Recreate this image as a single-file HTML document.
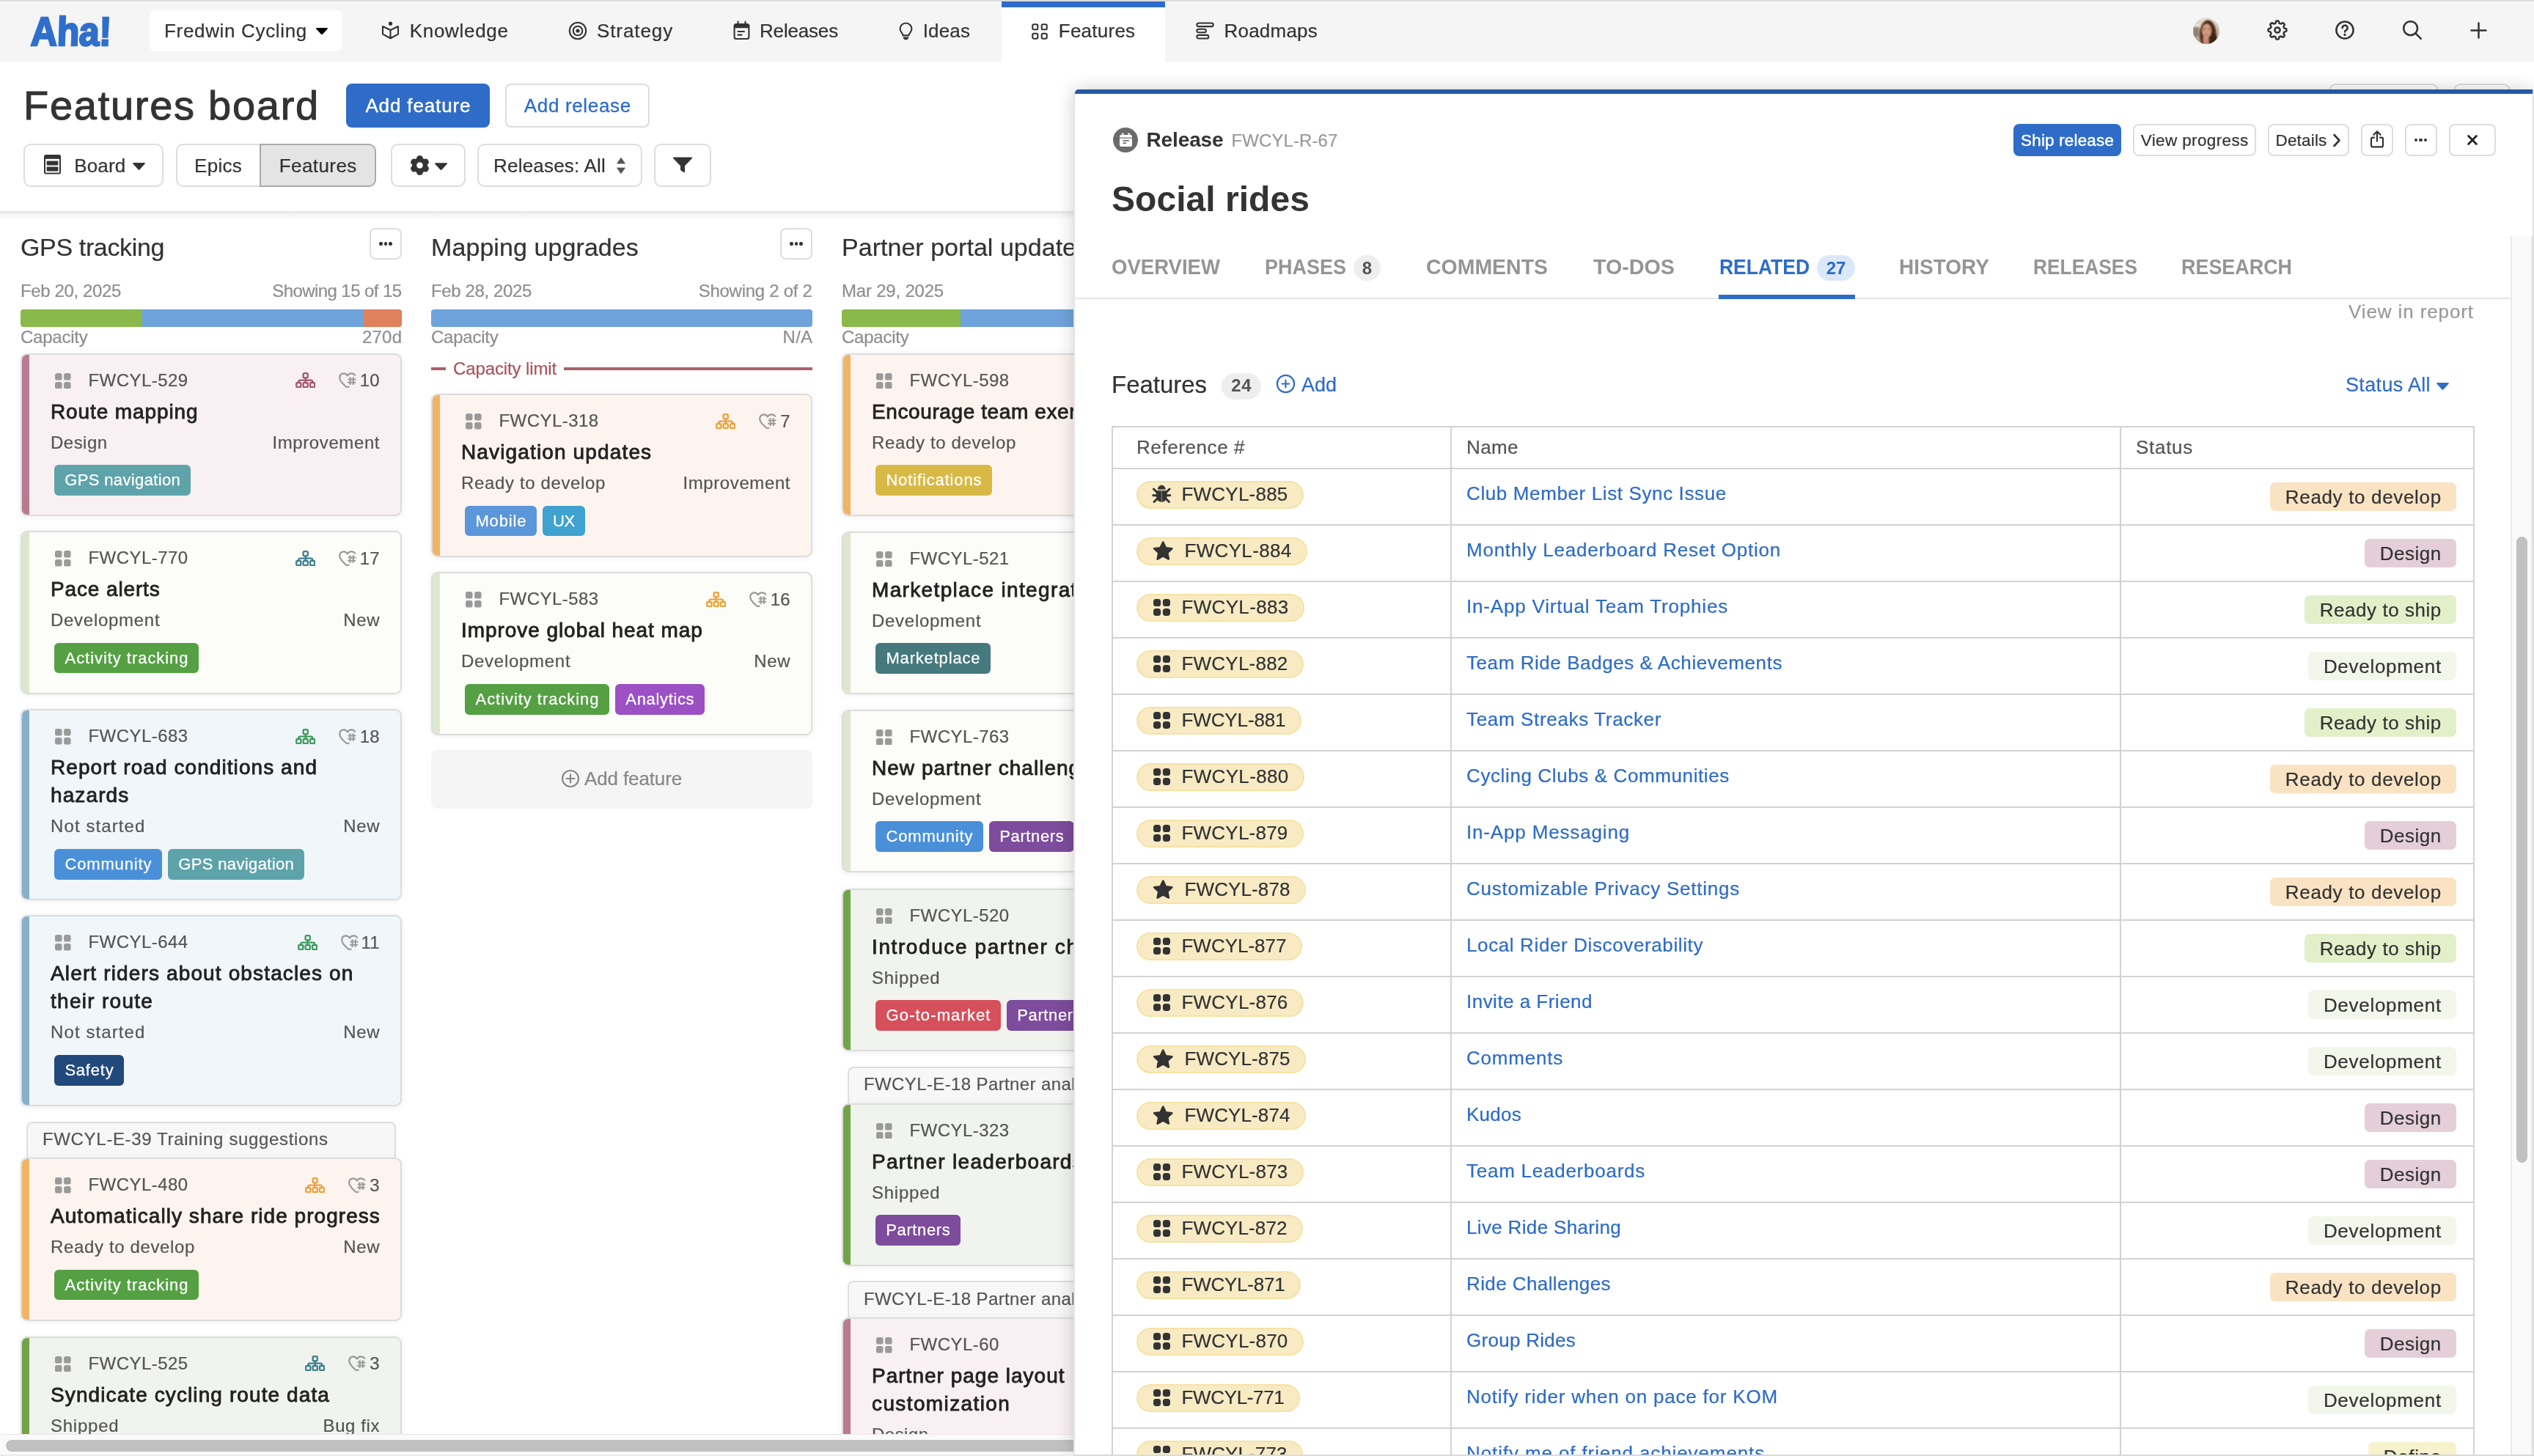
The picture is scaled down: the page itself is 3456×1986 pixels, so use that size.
<!DOCTYPE html>
<html><head><meta charset="utf-8"><title>Features board</title>
<style>
html,body{margin:0;padding:0;}
body{width:3456px;height:1986px;overflow:hidden;position:relative;background:#fff;font-family:"Liberation Sans",sans-serif;}
</style></head><body><div id="w" style="position:absolute;left:0;top:0;width:3456px;height:1986px;overflow:hidden;will-change:transform">
<div id="board" style="position:absolute;left:0;top:288px;width:3456px;height:1698px;overflow:hidden">
<div style="position:absolute;left:0;top:-288px;width:3456px;height:1986px">
<span style="position:absolute;top:314.8px;font-size:34px;line-height:44px;color:#333;white-space:nowrap;-webkit-text-stroke:0.22px #333;letter-spacing:-0.36px;left:28.0px;">GPS tracking</span>
<div style="position:absolute;left:504px;top:311px;width:44px;height:43px;box-sizing:border-box;border:2px solid #ddd;border-radius:8px;background:#fff;"></div>
<div style="position:absolute;left:517.4px;top:330.2px;width:4.4px;height:4.4px;box-sizing:border-box;background:#333;border-radius:50%;"></div>
<div style="position:absolute;left:523.9px;top:330.2px;width:4.4px;height:4.4px;box-sizing:border-box;background:#333;border-radius:50%;"></div>
<div style="position:absolute;left:530.4px;top:330.2px;width:4.4px;height:4.4px;box-sizing:border-box;background:#333;border-radius:50%;"></div>
<span style="position:absolute;top:380.7px;font-size:24px;line-height:31px;color:#8e8e8e;white-space:nowrap;-webkit-text-stroke:0.22px #8e8e8e;letter-spacing:-0.37px;left:28.0px;">Feb 20, 2025</span>
<span style="position:absolute;top:380.7px;font-size:24px;line-height:31px;color:#8e8e8e;white-space:nowrap;-webkit-text-stroke:0.22px #8e8e8e;letter-spacing:-0.59px;right:2908.6px;">Showing 15 of 15</span>
<div style="position:absolute;left:28px;top:422px;width:520px;height:23.5px;border-radius:4px;overflow:hidden;display:flex"><div style="width:166px;background:#8ab84a"></div><div style="width:302px;background:#6fa3dc"></div><div style="width:52px;background:#e0805c"></div></div>
<span style="position:absolute;top:443.8px;font-size:24px;line-height:31px;color:#8e8e8e;white-space:nowrap;-webkit-text-stroke:0.22px #8e8e8e;letter-spacing:-0.23px;left:28.0px;">Capacity</span>
<span style="position:absolute;top:443.8px;font-size:24px;line-height:31px;color:#8e8e8e;white-space:nowrap;-webkit-text-stroke:0.22px #8e8e8e;letter-spacing:0.20px;right:2907.8px;">270d</span>
<div style="position:absolute;left:28px;top:481.6px;width:520px;height:222.5px;box-sizing:border-box;border:2px solid #dcdcdc;border-radius:9px;background:#f8f0f3;box-shadow:0 1px 9px rgba(0,0,0,.07);overflow:hidden"><div style="position:absolute;left:0;top:0;bottom:0;width:10px;background:#b97a92"></div></div>
<svg style="position:absolute;left:75px;top:508.6px" width="21.6" height="21.6" viewBox="0 0 1 1" ><rect x="0.000" y="0.000" width="0.44" height="0.44" rx="0.132" fill="#9a9a9a"/><rect x="0.000" y="0.560" width="0.44" height="0.44" rx="0.132" fill="#9a9a9a"/><rect x="0.560" y="0.000" width="0.44" height="0.44" rx="0.132" fill="#9a9a9a"/><rect x="0.560" y="0.560" width="0.44" height="0.44" rx="0.132" fill="#9a9a9a"/></svg>
<span style="position:absolute;top:502.7px;font-size:24px;line-height:31px;color:#555;white-space:nowrap;-webkit-text-stroke:0.22px #555;letter-spacing:0.45px;left:120.5px;">FWCYL-529</span>
<span style="position:absolute;top:503.1px;font-size:24px;line-height:31px;color:#555;white-space:nowrap;-webkit-text-stroke:0.22px #555;right:2938.5px;">10</span>
<svg style="position:absolute;left:461.5px;top:508.1px" width="24" height="21.4" viewBox="0 0 24 21.4" ><g fill="none" stroke="#999" stroke-width="2.2" stroke-linecap="round" stroke-linejoin="round">
<path d="M13.5 19.6 Q11.8 21 10.2 19.6 C6 16 1.2 12.2 1.2 7.2 C1.2 1.2 8.6 -0.8 11.9 4.4 C14.2 0.6 19.8 0.2 22.2 3.6"/>
</g>
<g stroke="#999" stroke-width="2" stroke-linecap="butt">
<path d="M15.6 6.2 V17 M19.8 6.2 V17 M12.6 9.4 H23.4 M12.2 13.8 H23"/>
</g></svg>
<svg style="position:absolute;left:402.5px;top:508.1px" width="27.4" height="21.4" viewBox="0 0 27.4 21.4" ><g fill="none" stroke="#a4566f" stroke-width="2.3" stroke-linejoin="round" stroke-linecap="round">
<rect x="10.6" y="1.2" width="6.2" height="6.2" rx="1.6"/>
<rect x="1.2" y="14" width="6.2" height="6.2" rx="1.6"/>
<rect x="10.6" y="14" width="6.2" height="6.2" rx="1.6"/>
<rect x="20" y="14" width="6.2" height="6.2" rx="1.6"/>
<path d="M13.7 7.4 V14 M4.3 14 V12.6 Q4.3 10.7 6.2 10.7 H21.2 Q23.1 10.7 23.1 12.6 V14"/>
</g></svg>
<span style="position:absolute;top:543.6px;font-size:28px;line-height:36px;color:#222;white-space:nowrap;-webkit-text-stroke:0.85px #222;letter-spacing:0.89px;left:69.0px;">Route mapping</span>
<span style="position:absolute;top:587.6px;font-size:24px;line-height:31px;color:#555;white-space:nowrap;-webkit-text-stroke:0.22px #555;letter-spacing:0.48px;left:69.0px;">Design</span>
<span style="position:absolute;top:587.6px;font-size:24px;line-height:31px;color:#555;white-space:nowrap;-webkit-text-stroke:0.22px #555;letter-spacing:0.60px;right:2937.9px;">Improvement</span>
<div style="position:absolute;left:74px;top:634.3px;width:186px;height:41.5px;border-radius:6px;background:#5fa3aa"></div>
<span style="position:absolute;top:640.3px;font-size:22px;line-height:29px;color:#fff;white-space:nowrap;-webkit-text-stroke:0.25px #fff;letter-spacing:0.37px;left:-832.8px;width:2000px;text-align:center;">GPS navigation</span>
<div style="position:absolute;left:28px;top:724.2px;width:520px;height:222.5px;box-sizing:border-box;border:2px solid #dcdcdc;border-radius:9px;background:#fcfcf8;box-shadow:0 1px 9px rgba(0,0,0,.07);overflow:hidden"><div style="position:absolute;left:0;top:0;bottom:0;width:10px;background:#dde7cd"></div></div>
<svg style="position:absolute;left:75px;top:751.2px" width="21.6" height="21.6" viewBox="0 0 1 1" ><rect x="0.000" y="0.000" width="0.44" height="0.44" rx="0.132" fill="#9a9a9a"/><rect x="0.000" y="0.560" width="0.44" height="0.44" rx="0.132" fill="#9a9a9a"/><rect x="0.560" y="0.000" width="0.44" height="0.44" rx="0.132" fill="#9a9a9a"/><rect x="0.560" y="0.560" width="0.44" height="0.44" rx="0.132" fill="#9a9a9a"/></svg>
<span style="position:absolute;top:745.3px;font-size:24px;line-height:31px;color:#555;white-space:nowrap;-webkit-text-stroke:0.22px #555;letter-spacing:0.45px;left:120.5px;">FWCYL-770</span>
<span style="position:absolute;top:745.7px;font-size:24px;line-height:31px;color:#555;white-space:nowrap;-webkit-text-stroke:0.22px #555;right:2938.5px;">17</span>
<svg style="position:absolute;left:461.5px;top:750.7px" width="24" height="21.4" viewBox="0 0 24 21.4" ><g fill="none" stroke="#999" stroke-width="2.2" stroke-linecap="round" stroke-linejoin="round">
<path d="M13.5 19.6 Q11.8 21 10.2 19.6 C6 16 1.2 12.2 1.2 7.2 C1.2 1.2 8.6 -0.8 11.9 4.4 C14.2 0.6 19.8 0.2 22.2 3.6"/>
</g>
<g stroke="#999" stroke-width="2" stroke-linecap="butt">
<path d="M15.6 6.2 V17 M19.8 6.2 V17 M12.6 9.4 H23.4 M12.2 13.8 H23"/>
</g></svg>
<svg style="position:absolute;left:402.5px;top:750.7px" width="27.4" height="21.4" viewBox="0 0 27.4 21.4" ><g fill="none" stroke="#3d7f8f" stroke-width="2.3" stroke-linejoin="round" stroke-linecap="round">
<rect x="10.6" y="1.2" width="6.2" height="6.2" rx="1.6"/>
<rect x="1.2" y="14" width="6.2" height="6.2" rx="1.6"/>
<rect x="10.6" y="14" width="6.2" height="6.2" rx="1.6"/>
<rect x="20" y="14" width="6.2" height="6.2" rx="1.6"/>
<path d="M13.7 7.4 V14 M4.3 14 V12.6 Q4.3 10.7 6.2 10.7 H21.2 Q23.1 10.7 23.1 12.6 V14"/>
</g></svg>
<span style="position:absolute;top:786.2px;font-size:28px;line-height:36px;color:#222;white-space:nowrap;-webkit-text-stroke:0.85px #222;letter-spacing:0.87px;left:69.0px;">Pace alerts</span>
<span style="position:absolute;top:830.2px;font-size:24px;line-height:31px;color:#555;white-space:nowrap;-webkit-text-stroke:0.22px #555;letter-spacing:0.72px;left:69.0px;">Development</span>
<span style="position:absolute;top:830.2px;font-size:24px;line-height:31px;color:#555;white-space:nowrap;-webkit-text-stroke:0.22px #555;letter-spacing:0.60px;right:2937.9px;">New</span>
<div style="position:absolute;left:74px;top:876.9000000000001px;width:197px;height:41.5px;border-radius:6px;background:#55a043"></div>
<span style="position:absolute;top:882.9px;font-size:22px;line-height:29px;color:#fff;white-space:nowrap;-webkit-text-stroke:0.25px #fff;letter-spacing:0.95px;left:-827.0px;width:2000px;text-align:center;">Activity tracking</span>
<div style="position:absolute;left:28px;top:967px;width:520px;height:260.8px;box-sizing:border-box;border:2px solid #dcdcdc;border-radius:9px;background:#f1f6fa;box-shadow:0 1px 9px rgba(0,0,0,.07);overflow:hidden"><div style="position:absolute;left:0;top:0;bottom:0;width:10px;background:#86afca"></div></div>
<svg style="position:absolute;left:75px;top:994px" width="21.6" height="21.6" viewBox="0 0 1 1" ><rect x="0.000" y="0.000" width="0.44" height="0.44" rx="0.132" fill="#9a9a9a"/><rect x="0.000" y="0.560" width="0.44" height="0.44" rx="0.132" fill="#9a9a9a"/><rect x="0.560" y="0.000" width="0.44" height="0.44" rx="0.132" fill="#9a9a9a"/><rect x="0.560" y="0.560" width="0.44" height="0.44" rx="0.132" fill="#9a9a9a"/></svg>
<span style="position:absolute;top:988.1px;font-size:24px;line-height:31px;color:#555;white-space:nowrap;-webkit-text-stroke:0.22px #555;letter-spacing:0.45px;left:120.5px;">FWCYL-683</span>
<span style="position:absolute;top:988.5px;font-size:24px;line-height:31px;color:#555;white-space:nowrap;-webkit-text-stroke:0.22px #555;right:2938.5px;">18</span>
<svg style="position:absolute;left:461.5px;top:993.5px" width="24" height="21.4" viewBox="0 0 24 21.4" ><g fill="none" stroke="#999" stroke-width="2.2" stroke-linecap="round" stroke-linejoin="round">
<path d="M13.5 19.6 Q11.8 21 10.2 19.6 C6 16 1.2 12.2 1.2 7.2 C1.2 1.2 8.6 -0.8 11.9 4.4 C14.2 0.6 19.8 0.2 22.2 3.6"/>
</g>
<g stroke="#999" stroke-width="2" stroke-linecap="butt">
<path d="M15.6 6.2 V17 M19.8 6.2 V17 M12.6 9.4 H23.4 M12.2 13.8 H23"/>
</g></svg>
<svg style="position:absolute;left:402.5px;top:993.5px" width="27.4" height="21.4" viewBox="0 0 27.4 21.4" ><g fill="none" stroke="#3c9a5c" stroke-width="2.3" stroke-linejoin="round" stroke-linecap="round">
<rect x="10.6" y="1.2" width="6.2" height="6.2" rx="1.6"/>
<rect x="1.2" y="14" width="6.2" height="6.2" rx="1.6"/>
<rect x="10.6" y="14" width="6.2" height="6.2" rx="1.6"/>
<rect x="20" y="14" width="6.2" height="6.2" rx="1.6"/>
<path d="M13.7 7.4 V14 M4.3 14 V12.6 Q4.3 10.7 6.2 10.7 H21.2 Q23.1 10.7 23.1 12.6 V14"/>
</g></svg>
<span style="position:absolute;top:1029.0px;font-size:28px;line-height:36px;color:#222;white-space:nowrap;-webkit-text-stroke:0.85px #222;letter-spacing:1.07px;left:69.0px;">Report road conditions and</span>
<span style="position:absolute;top:1066.5px;font-size:28px;line-height:36px;color:#222;white-space:nowrap;-webkit-text-stroke:0.85px #222;letter-spacing:1.11px;left:69.0px;">hazards</span>
<span style="position:absolute;top:1111.3px;font-size:24px;line-height:31px;color:#555;white-space:nowrap;-webkit-text-stroke:0.22px #555;letter-spacing:1.10px;left:69.0px;">Not started</span>
<span style="position:absolute;top:1111.3px;font-size:24px;line-height:31px;color:#555;white-space:nowrap;-webkit-text-stroke:0.22px #555;letter-spacing:0.60px;right:2937.9px;">New</span>
<div style="position:absolute;left:74px;top:1158.0px;width:147px;height:41.5px;border-radius:6px;background:#4a90d9"></div>
<span style="position:absolute;top:1164.0px;font-size:22px;line-height:29px;color:#fff;white-space:nowrap;-webkit-text-stroke:0.25px #fff;letter-spacing:0.86px;left:-852.1px;width:2000px;text-align:center;">Community</span>
<div style="position:absolute;left:229px;top:1158.0px;width:186px;height:41.5px;border-radius:6px;background:#5fa3aa"></div>
<span style="position:absolute;top:1164.0px;font-size:22px;line-height:29px;color:#fff;white-space:nowrap;-webkit-text-stroke:0.25px #fff;letter-spacing:0.37px;left:-677.8px;width:2000px;text-align:center;">GPS navigation</span>
<div style="position:absolute;left:28px;top:1248.1px;width:520px;height:260.8px;box-sizing:border-box;border:2px solid #dcdcdc;border-radius:9px;background:#f1f6fa;box-shadow:0 1px 9px rgba(0,0,0,.07);overflow:hidden"><div style="position:absolute;left:0;top:0;bottom:0;width:10px;background:#86afca"></div></div>
<svg style="position:absolute;left:75px;top:1275.1px" width="21.6" height="21.6" viewBox="0 0 1 1" ><rect x="0.000" y="0.000" width="0.44" height="0.44" rx="0.132" fill="#9a9a9a"/><rect x="0.000" y="0.560" width="0.44" height="0.44" rx="0.132" fill="#9a9a9a"/><rect x="0.560" y="0.000" width="0.44" height="0.44" rx="0.132" fill="#9a9a9a"/><rect x="0.560" y="0.560" width="0.44" height="0.44" rx="0.132" fill="#9a9a9a"/></svg>
<span style="position:absolute;top:1269.2px;font-size:24px;line-height:31px;color:#555;white-space:nowrap;-webkit-text-stroke:0.22px #555;letter-spacing:0.45px;left:120.5px;">FWCYL-644</span>
<span style="position:absolute;top:1269.6px;font-size:24px;line-height:31px;color:#555;white-space:nowrap;-webkit-text-stroke:0.22px #555;right:2938.5px;">11</span>
<svg style="position:absolute;left:464.5px;top:1274.6px" width="24" height="21.4" viewBox="0 0 24 21.4" ><g fill="none" stroke="#999" stroke-width="2.2" stroke-linecap="round" stroke-linejoin="round">
<path d="M13.5 19.6 Q11.8 21 10.2 19.6 C6 16 1.2 12.2 1.2 7.2 C1.2 1.2 8.6 -0.8 11.9 4.4 C14.2 0.6 19.8 0.2 22.2 3.6"/>
</g>
<g stroke="#999" stroke-width="2" stroke-linecap="butt">
<path d="M15.6 6.2 V17 M19.8 6.2 V17 M12.6 9.4 H23.4 M12.2 13.8 H23"/>
</g></svg>
<svg style="position:absolute;left:405.5px;top:1274.6px" width="27.4" height="21.4" viewBox="0 0 27.4 21.4" ><g fill="none" stroke="#3c9a5c" stroke-width="2.3" stroke-linejoin="round" stroke-linecap="round">
<rect x="10.6" y="1.2" width="6.2" height="6.2" rx="1.6"/>
<rect x="1.2" y="14" width="6.2" height="6.2" rx="1.6"/>
<rect x="10.6" y="14" width="6.2" height="6.2" rx="1.6"/>
<rect x="20" y="14" width="6.2" height="6.2" rx="1.6"/>
<path d="M13.7 7.4 V14 M4.3 14 V12.6 Q4.3 10.7 6.2 10.7 H21.2 Q23.1 10.7 23.1 12.6 V14"/>
</g></svg>
<span style="position:absolute;top:1310.1px;font-size:28px;line-height:36px;color:#222;white-space:nowrap;-webkit-text-stroke:0.85px #222;letter-spacing:1.14px;left:69.0px;">Alert riders about obstacles on</span>
<span style="position:absolute;top:1347.6px;font-size:28px;line-height:36px;color:#222;white-space:nowrap;-webkit-text-stroke:0.85px #222;letter-spacing:1.28px;left:69.0px;">their route</span>
<span style="position:absolute;top:1392.4px;font-size:24px;line-height:31px;color:#555;white-space:nowrap;-webkit-text-stroke:0.22px #555;letter-spacing:1.10px;left:69.0px;">Not started</span>
<span style="position:absolute;top:1392.4px;font-size:24px;line-height:31px;color:#555;white-space:nowrap;-webkit-text-stroke:0.22px #555;letter-spacing:0.60px;right:2937.9px;">New</span>
<div style="position:absolute;left:74px;top:1439.1px;width:95px;height:41.5px;border-radius:6px;background:#22497b"></div>
<span style="position:absolute;top:1445.1px;font-size:22px;line-height:29px;color:#fff;white-space:nowrap;-webkit-text-stroke:0.25px #fff;letter-spacing:0.77px;left:-878.1px;width:2000px;text-align:center;">Safety</span>
<div style="position:absolute;left:36px;top:1529.5px;width:504px;height:60px;box-sizing:border-box;border:2px solid #dedede;border-radius:8px;background:#f7f7f7;"></div>
<span style="position:absolute;top:1538.3px;font-size:24px;line-height:31px;color:#555;white-space:nowrap;-webkit-text-stroke:0.22px #555;letter-spacing:0.65px;left:58.0px;">FWCYL-E-39 Training suggestions</span>
<div style="position:absolute;left:28px;top:1579px;width:520px;height:222.5px;box-sizing:border-box;border:2px solid #dcdcdc;border-radius:9px;background:#fef4ef;box-shadow:0 1px 9px rgba(0,0,0,.07);overflow:hidden"><div style="position:absolute;left:0;top:0;bottom:0;width:10px;background:#f0b465"></div></div>
<svg style="position:absolute;left:75px;top:1606px" width="21.6" height="21.6" viewBox="0 0 1 1" ><rect x="0.000" y="0.000" width="0.44" height="0.44" rx="0.132" fill="#9a9a9a"/><rect x="0.000" y="0.560" width="0.44" height="0.44" rx="0.132" fill="#9a9a9a"/><rect x="0.560" y="0.000" width="0.44" height="0.44" rx="0.132" fill="#9a9a9a"/><rect x="0.560" y="0.560" width="0.44" height="0.44" rx="0.132" fill="#9a9a9a"/></svg>
<span style="position:absolute;top:1600.1px;font-size:24px;line-height:31px;color:#555;white-space:nowrap;-webkit-text-stroke:0.22px #555;letter-spacing:0.45px;left:120.5px;">FWCYL-480</span>
<span style="position:absolute;top:1600.5px;font-size:24px;line-height:31px;color:#555;white-space:nowrap;-webkit-text-stroke:0.22px #555;right:2938.5px;">3</span>
<svg style="position:absolute;left:474.5px;top:1605.5px" width="24" height="21.4" viewBox="0 0 24 21.4" ><g fill="none" stroke="#999" stroke-width="2.2" stroke-linecap="round" stroke-linejoin="round">
<path d="M13.5 19.6 Q11.8 21 10.2 19.6 C6 16 1.2 12.2 1.2 7.2 C1.2 1.2 8.6 -0.8 11.9 4.4 C14.2 0.6 19.8 0.2 22.2 3.6"/>
</g>
<g stroke="#999" stroke-width="2" stroke-linecap="butt">
<path d="M15.6 6.2 V17 M19.8 6.2 V17 M12.6 9.4 H23.4 M12.2 13.8 H23"/>
</g></svg>
<svg style="position:absolute;left:415.5px;top:1605.5px" width="27.4" height="21.4" viewBox="0 0 27.4 21.4" ><g fill="none" stroke="#eaa23c" stroke-width="2.3" stroke-linejoin="round" stroke-linecap="round">
<rect x="10.6" y="1.2" width="6.2" height="6.2" rx="1.6"/>
<rect x="1.2" y="14" width="6.2" height="6.2" rx="1.6"/>
<rect x="10.6" y="14" width="6.2" height="6.2" rx="1.6"/>
<rect x="20" y="14" width="6.2" height="6.2" rx="1.6"/>
<path d="M13.7 7.4 V14 M4.3 14 V12.6 Q4.3 10.7 6.2 10.7 H21.2 Q23.1 10.7 23.1 12.6 V14"/>
</g></svg>
<span style="position:absolute;top:1641.0px;font-size:28px;line-height:36px;color:#222;white-space:nowrap;-webkit-text-stroke:0.85px #222;letter-spacing:1.04px;left:69.0px;">Automatically share ride progress</span>
<span style="position:absolute;top:1685.0px;font-size:24px;line-height:31px;color:#555;white-space:nowrap;-webkit-text-stroke:0.22px #555;letter-spacing:0.64px;left:69.0px;">Ready to develop</span>
<span style="position:absolute;top:1685.0px;font-size:24px;line-height:31px;color:#555;white-space:nowrap;-webkit-text-stroke:0.22px #555;letter-spacing:0.60px;right:2937.9px;">New</span>
<div style="position:absolute;left:74px;top:1731.7px;width:197px;height:41.5px;border-radius:6px;background:#55a043"></div>
<span style="position:absolute;top:1737.7px;font-size:22px;line-height:29px;color:#fff;white-space:nowrap;-webkit-text-stroke:0.25px #fff;letter-spacing:0.95px;left:-827.0px;width:2000px;text-align:center;">Activity tracking</span>
<div style="position:absolute;left:28px;top:1822.5px;width:520px;height:222.5px;box-sizing:border-box;border:2px solid #dcdcdc;border-radius:9px;background:#f1f4ee;box-shadow:0 1px 9px rgba(0,0,0,.07);overflow:hidden"><div style="position:absolute;left:0;top:0;bottom:0;width:10px;background:#72a348"></div></div>
<svg style="position:absolute;left:75px;top:1849.5px" width="21.6" height="21.6" viewBox="0 0 1 1" ><rect x="0.000" y="0.000" width="0.44" height="0.44" rx="0.132" fill="#9a9a9a"/><rect x="0.000" y="0.560" width="0.44" height="0.44" rx="0.132" fill="#9a9a9a"/><rect x="0.560" y="0.000" width="0.44" height="0.44" rx="0.132" fill="#9a9a9a"/><rect x="0.560" y="0.560" width="0.44" height="0.44" rx="0.132" fill="#9a9a9a"/></svg>
<span style="position:absolute;top:1843.6px;font-size:24px;line-height:31px;color:#555;white-space:nowrap;-webkit-text-stroke:0.22px #555;letter-spacing:0.45px;left:120.5px;">FWCYL-525</span>
<span style="position:absolute;top:1844.0px;font-size:24px;line-height:31px;color:#555;white-space:nowrap;-webkit-text-stroke:0.22px #555;right:2938.5px;">3</span>
<svg style="position:absolute;left:474.5px;top:1849.0px" width="24" height="21.4" viewBox="0 0 24 21.4" ><g fill="none" stroke="#999" stroke-width="2.2" stroke-linecap="round" stroke-linejoin="round">
<path d="M13.5 19.6 Q11.8 21 10.2 19.6 C6 16 1.2 12.2 1.2 7.2 C1.2 1.2 8.6 -0.8 11.9 4.4 C14.2 0.6 19.8 0.2 22.2 3.6"/>
</g>
<g stroke="#999" stroke-width="2" stroke-linecap="butt">
<path d="M15.6 6.2 V17 M19.8 6.2 V17 M12.6 9.4 H23.4 M12.2 13.8 H23"/>
</g></svg>
<svg style="position:absolute;left:415.5px;top:1849.0px" width="27.4" height="21.4" viewBox="0 0 27.4 21.4" ><g fill="none" stroke="#3d7f8f" stroke-width="2.3" stroke-linejoin="round" stroke-linecap="round">
<rect x="10.6" y="1.2" width="6.2" height="6.2" rx="1.6"/>
<rect x="1.2" y="14" width="6.2" height="6.2" rx="1.6"/>
<rect x="10.6" y="14" width="6.2" height="6.2" rx="1.6"/>
<rect x="20" y="14" width="6.2" height="6.2" rx="1.6"/>
<path d="M13.7 7.4 V14 M4.3 14 V12.6 Q4.3 10.7 6.2 10.7 H21.2 Q23.1 10.7 23.1 12.6 V14"/>
</g></svg>
<span style="position:absolute;top:1884.5px;font-size:28px;line-height:36px;color:#222;white-space:nowrap;-webkit-text-stroke:0.85px #222;letter-spacing:1.10px;left:69.0px;">Syndicate cycling route data</span>
<span style="position:absolute;top:1928.5px;font-size:24px;line-height:31px;color:#555;white-space:nowrap;-webkit-text-stroke:0.22px #555;letter-spacing:0.75px;left:69.0px;">Shipped</span>
<span style="position:absolute;top:1928.5px;font-size:24px;line-height:31px;color:#555;white-space:nowrap;-webkit-text-stroke:0.22px #555;letter-spacing:0.60px;right:2937.9px;">Bug fix</span>
<span style="position:absolute;top:314.8px;font-size:34px;line-height:44px;color:#333;white-space:nowrap;-webkit-text-stroke:0.22px #333;letter-spacing:0.08px;left:588.0px;">Mapping upgrades</span>
<div style="position:absolute;left:1064px;top:311px;width:44px;height:43px;box-sizing:border-box;border:2px solid #ddd;border-radius:8px;background:#fff;"></div>
<div style="position:absolute;left:1077.4px;top:330.2px;width:4.4px;height:4.4px;box-sizing:border-box;background:#333;border-radius:50%;"></div>
<div style="position:absolute;left:1083.9px;top:330.2px;width:4.4px;height:4.4px;box-sizing:border-box;background:#333;border-radius:50%;"></div>
<div style="position:absolute;left:1090.4px;top:330.2px;width:4.4px;height:4.4px;box-sizing:border-box;background:#333;border-radius:50%;"></div>
<span style="position:absolute;top:380.7px;font-size:24px;line-height:31px;color:#8e8e8e;white-space:nowrap;-webkit-text-stroke:0.22px #8e8e8e;letter-spacing:-0.37px;left:588.0px;">Feb 28, 2025</span>
<span style="position:absolute;top:380.7px;font-size:24px;line-height:31px;color:#8e8e8e;white-space:nowrap;-webkit-text-stroke:0.22px #8e8e8e;letter-spacing:-0.27px;right:2348.3px;">Showing 2 of 2</span>
<div style="position:absolute;left:588px;top:422px;width:520px;height:23.5px;border-radius:4px;overflow:hidden;display:flex"><div style="width:520px;background:#6fa3dc"></div></div>
<span style="position:absolute;top:443.8px;font-size:24px;line-height:31px;color:#8e8e8e;white-space:nowrap;-webkit-text-stroke:0.22px #8e8e8e;letter-spacing:-0.23px;left:588.0px;">Capacity</span>
<span style="position:absolute;top:443.8px;font-size:24px;line-height:31px;color:#8e8e8e;white-space:nowrap;-webkit-text-stroke:0.22px #8e8e8e;letter-spacing:0.20px;right:2347.8px;">N/A</span>
<div style="position:absolute;left:588px;top:501px;width:20px;height:3.5px;box-sizing:border-box;background:#a9626a;"></div>
<span style="position:absolute;top:487.0px;font-size:24px;line-height:31px;color:#a9525c;white-space:nowrap;-webkit-text-stroke:0.22px #a9525c;letter-spacing:-0.12px;left:618.0px;">Capacity limit</span>
<div style="position:absolute;left:769px;top:501px;width:339px;height:3.5px;box-sizing:border-box;background:#a9626a;"></div>
<div style="position:absolute;left:588px;top:537px;width:520px;height:222.5px;box-sizing:border-box;border:2px solid #dcdcdc;border-radius:9px;background:#fef4ef;box-shadow:0 1px 9px rgba(0,0,0,.07);overflow:hidden"><div style="position:absolute;left:0;top:0;bottom:0;width:10px;background:#f0b465"></div></div>
<svg style="position:absolute;left:635px;top:564px" width="21.6" height="21.6" viewBox="0 0 1 1" ><rect x="0.000" y="0.000" width="0.44" height="0.44" rx="0.132" fill="#9a9a9a"/><rect x="0.000" y="0.560" width="0.44" height="0.44" rx="0.132" fill="#9a9a9a"/><rect x="0.560" y="0.000" width="0.44" height="0.44" rx="0.132" fill="#9a9a9a"/><rect x="0.560" y="0.560" width="0.44" height="0.44" rx="0.132" fill="#9a9a9a"/></svg>
<span style="position:absolute;top:558.1px;font-size:24px;line-height:31px;color:#555;white-space:nowrap;-webkit-text-stroke:0.22px #555;letter-spacing:0.45px;left:680.5px;">FWCYL-318</span>
<span style="position:absolute;top:558.5px;font-size:24px;line-height:31px;color:#555;white-space:nowrap;-webkit-text-stroke:0.22px #555;right:2378.5px;">7</span>
<svg style="position:absolute;left:1034.5px;top:563.5px" width="24" height="21.4" viewBox="0 0 24 21.4" ><g fill="none" stroke="#999" stroke-width="2.2" stroke-linecap="round" stroke-linejoin="round">
<path d="M13.5 19.6 Q11.8 21 10.2 19.6 C6 16 1.2 12.2 1.2 7.2 C1.2 1.2 8.6 -0.8 11.9 4.4 C14.2 0.6 19.8 0.2 22.2 3.6"/>
</g>
<g stroke="#999" stroke-width="2" stroke-linecap="butt">
<path d="M15.6 6.2 V17 M19.8 6.2 V17 M12.6 9.4 H23.4 M12.2 13.8 H23"/>
</g></svg>
<svg style="position:absolute;left:975.5px;top:563.5px" width="27.4" height="21.4" viewBox="0 0 27.4 21.4" ><g fill="none" stroke="#eaa23c" stroke-width="2.3" stroke-linejoin="round" stroke-linecap="round">
<rect x="10.6" y="1.2" width="6.2" height="6.2" rx="1.6"/>
<rect x="1.2" y="14" width="6.2" height="6.2" rx="1.6"/>
<rect x="10.6" y="14" width="6.2" height="6.2" rx="1.6"/>
<rect x="20" y="14" width="6.2" height="6.2" rx="1.6"/>
<path d="M13.7 7.4 V14 M4.3 14 V12.6 Q4.3 10.7 6.2 10.7 H21.2 Q23.1 10.7 23.1 12.6 V14"/>
</g></svg>
<span style="position:absolute;top:599.0px;font-size:28px;line-height:36px;color:#222;white-space:nowrap;-webkit-text-stroke:0.85px #222;letter-spacing:1.14px;left:629.0px;">Navigation updates</span>
<span style="position:absolute;top:643.0px;font-size:24px;line-height:31px;color:#555;white-space:nowrap;-webkit-text-stroke:0.22px #555;letter-spacing:0.64px;left:629.0px;">Ready to develop</span>
<span style="position:absolute;top:643.0px;font-size:24px;line-height:31px;color:#555;white-space:nowrap;-webkit-text-stroke:0.22px #555;letter-spacing:0.60px;right:2377.9px;">Improvement</span>
<div style="position:absolute;left:634px;top:689.7px;width:98px;height:41.5px;border-radius:6px;background:#5b96d9"></div>
<span style="position:absolute;top:695.7px;font-size:22px;line-height:29px;color:#fff;white-space:nowrap;-webkit-text-stroke:0.25px #fff;letter-spacing:0.86px;left:-316.6px;width:2000px;text-align:center;">Mobile</span>
<div style="position:absolute;left:740px;top:689.7px;width:58px;height:41.5px;border-radius:6px;background:#3fa2cf"></div>
<span style="position:absolute;top:695.7px;font-size:22px;line-height:29px;color:#fff;white-space:nowrap;-webkit-text-stroke:0.25px #fff;letter-spacing:-0.28px;left:-231.1px;width:2000px;text-align:center;">UX</span>
<div style="position:absolute;left:588px;top:780.3px;width:520px;height:222.5px;box-sizing:border-box;border:2px solid #dcdcdc;border-radius:9px;background:#fcfcf8;box-shadow:0 1px 9px rgba(0,0,0,.07);overflow:hidden"><div style="position:absolute;left:0;top:0;bottom:0;width:10px;background:#dde7cd"></div></div>
<svg style="position:absolute;left:635px;top:807.3px" width="21.6" height="21.6" viewBox="0 0 1 1" ><rect x="0.000" y="0.000" width="0.44" height="0.44" rx="0.132" fill="#9a9a9a"/><rect x="0.000" y="0.560" width="0.44" height="0.44" rx="0.132" fill="#9a9a9a"/><rect x="0.560" y="0.000" width="0.44" height="0.44" rx="0.132" fill="#9a9a9a"/><rect x="0.560" y="0.560" width="0.44" height="0.44" rx="0.132" fill="#9a9a9a"/></svg>
<span style="position:absolute;top:801.4px;font-size:24px;line-height:31px;color:#555;white-space:nowrap;-webkit-text-stroke:0.22px #555;letter-spacing:0.45px;left:680.5px;">FWCYL-583</span>
<span style="position:absolute;top:801.8px;font-size:24px;line-height:31px;color:#555;white-space:nowrap;-webkit-text-stroke:0.22px #555;right:2378.5px;">16</span>
<svg style="position:absolute;left:1021.5px;top:806.8px" width="24" height="21.4" viewBox="0 0 24 21.4" ><g fill="none" stroke="#999" stroke-width="2.2" stroke-linecap="round" stroke-linejoin="round">
<path d="M13.5 19.6 Q11.8 21 10.2 19.6 C6 16 1.2 12.2 1.2 7.2 C1.2 1.2 8.6 -0.8 11.9 4.4 C14.2 0.6 19.8 0.2 22.2 3.6"/>
</g>
<g stroke="#999" stroke-width="2" stroke-linecap="butt">
<path d="M15.6 6.2 V17 M19.8 6.2 V17 M12.6 9.4 H23.4 M12.2 13.8 H23"/>
</g></svg>
<svg style="position:absolute;left:962.5px;top:806.8px" width="27.4" height="21.4" viewBox="0 0 27.4 21.4" ><g fill="none" stroke="#eaa23c" stroke-width="2.3" stroke-linejoin="round" stroke-linecap="round">
<rect x="10.6" y="1.2" width="6.2" height="6.2" rx="1.6"/>
<rect x="1.2" y="14" width="6.2" height="6.2" rx="1.6"/>
<rect x="10.6" y="14" width="6.2" height="6.2" rx="1.6"/>
<rect x="20" y="14" width="6.2" height="6.2" rx="1.6"/>
<path d="M13.7 7.4 V14 M4.3 14 V12.6 Q4.3 10.7 6.2 10.7 H21.2 Q23.1 10.7 23.1 12.6 V14"/>
</g></svg>
<span style="position:absolute;top:842.3px;font-size:28px;line-height:36px;color:#222;white-space:nowrap;-webkit-text-stroke:0.85px #222;letter-spacing:0.94px;left:629.0px;">Improve global heat map</span>
<span style="position:absolute;top:886.3px;font-size:24px;line-height:31px;color:#555;white-space:nowrap;-webkit-text-stroke:0.22px #555;letter-spacing:0.72px;left:629.0px;">Development</span>
<span style="position:absolute;top:886.3px;font-size:24px;line-height:31px;color:#555;white-space:nowrap;-webkit-text-stroke:0.22px #555;letter-spacing:0.60px;right:2377.9px;">New</span>
<div style="position:absolute;left:634px;top:933.0px;width:197px;height:41.5px;border-radius:6px;background:#55a043"></div>
<span style="position:absolute;top:939.0px;font-size:22px;line-height:29px;color:#fff;white-space:nowrap;-webkit-text-stroke:0.25px #fff;letter-spacing:0.95px;left:-267.0px;width:2000px;text-align:center;">Activity tracking</span>
<div style="position:absolute;left:839px;top:933.0px;width:122px;height:41.5px;border-radius:6px;background:#9b50c4"></div>
<span style="position:absolute;top:939.0px;font-size:22px;line-height:29px;color:#fff;white-space:nowrap;-webkit-text-stroke:0.25px #fff;letter-spacing:0.66px;left:-99.7px;width:2000px;text-align:center;">Analytics</span>
<div style="position:absolute;left:588px;top:1022.5px;width:520px;height:80px;box-sizing:border-box;background:#f5f5f5;border-radius:8px;"></div>
<svg style="position:absolute;left:765px;top:1049px" width="26" height="26" viewBox="0 0 26 26" ><circle cx="13" cy="13" r="11" fill="none" stroke="#888" stroke-width="2.2"/><path d="M13 7.5V18.5M7.5 13H18.5" stroke="#888" stroke-width="2.2" stroke-linecap="round"/></svg>
<span style="position:absolute;top:1045.0px;font-size:26px;line-height:34px;color:#888;white-space:nowrap;-webkit-text-stroke:0.22px #888;letter-spacing:-0.13px;left:797.0px;">Add feature</span>
<span style="position:absolute;top:314.8px;font-size:34px;line-height:44px;color:#333;white-space:nowrap;-webkit-text-stroke:0.22px #333;letter-spacing:0.03px;left:1148.0px;">Partner portal updates</span>
<div style="position:absolute;left:1624px;top:311px;width:44px;height:43px;box-sizing:border-box;border:2px solid #ddd;border-radius:8px;background:#fff;"></div>
<div style="position:absolute;left:1637.4px;top:330.2px;width:4.4px;height:4.4px;box-sizing:border-box;background:#333;border-radius:50%;"></div>
<div style="position:absolute;left:1643.9px;top:330.2px;width:4.4px;height:4.4px;box-sizing:border-box;background:#333;border-radius:50%;"></div>
<div style="position:absolute;left:1650.4px;top:330.2px;width:4.4px;height:4.4px;box-sizing:border-box;background:#333;border-radius:50%;"></div>
<span style="position:absolute;top:380.7px;font-size:24px;line-height:31px;color:#8e8e8e;white-space:nowrap;-webkit-text-stroke:0.22px #8e8e8e;letter-spacing:-0.20px;left:1148.0px;">Mar 29, 2025</span>
<div style="position:absolute;left:1148px;top:422px;width:520px;height:23.5px;border-radius:4px;overflow:hidden;display:flex"><div style="width:162px;background:#8ab84a"></div><div style="width:358px;background:#6fa3dc"></div></div>
<span style="position:absolute;top:443.8px;font-size:24px;line-height:31px;color:#8e8e8e;white-space:nowrap;-webkit-text-stroke:0.22px #8e8e8e;letter-spacing:-0.23px;left:1148.0px;">Capacity</span>
<div style="position:absolute;left:1148px;top:481.5px;width:520px;height:222.5px;box-sizing:border-box;border:2px solid #dcdcdc;border-radius:9px;background:#fef4ef;box-shadow:0 1px 9px rgba(0,0,0,.07);overflow:hidden"><div style="position:absolute;left:0;top:0;bottom:0;width:10px;background:#f0b465"></div></div>
<svg style="position:absolute;left:1195px;top:508.5px" width="21.6" height="21.6" viewBox="0 0 1 1" ><rect x="0.000" y="0.000" width="0.44" height="0.44" rx="0.132" fill="#9a9a9a"/><rect x="0.000" y="0.560" width="0.44" height="0.44" rx="0.132" fill="#9a9a9a"/><rect x="0.560" y="0.000" width="0.44" height="0.44" rx="0.132" fill="#9a9a9a"/><rect x="0.560" y="0.560" width="0.44" height="0.44" rx="0.132" fill="#9a9a9a"/></svg>
<span style="position:absolute;top:502.6px;font-size:24px;line-height:31px;color:#555;white-space:nowrap;-webkit-text-stroke:0.22px #555;letter-spacing:0.45px;left:1240.5px;">FWCYL-598</span>
<span style="position:absolute;top:543.5px;font-size:28px;line-height:36px;color:#222;white-space:nowrap;-webkit-text-stroke:0.85px #222;letter-spacing:0.60px;left:1189.0px;">Encourage team exercise</span>
<span style="position:absolute;top:587.5px;font-size:24px;line-height:31px;color:#555;white-space:nowrap;-webkit-text-stroke:0.22px #555;letter-spacing:0.64px;left:1189.0px;">Ready to develop</span>
<div style="position:absolute;left:1194px;top:634.2px;width:159px;height:41.5px;border-radius:6px;background:#d9b946"></div>
<span style="position:absolute;top:640.2px;font-size:22px;line-height:29px;color:#fff;white-space:nowrap;-webkit-text-stroke:0.25px #fff;letter-spacing:0.86px;left:273.9px;width:2000px;text-align:center;">Notifications</span>
<div style="position:absolute;left:1148px;top:724.5px;width:520px;height:222.5px;box-sizing:border-box;border:2px solid #dcdcdc;border-radius:9px;background:#fcfcf8;box-shadow:0 1px 9px rgba(0,0,0,.07);overflow:hidden"><div style="position:absolute;left:0;top:0;bottom:0;width:10px;background:#dde7cd"></div></div>
<svg style="position:absolute;left:1195px;top:751.5px" width="21.6" height="21.6" viewBox="0 0 1 1" ><rect x="0.000" y="0.000" width="0.44" height="0.44" rx="0.132" fill="#9a9a9a"/><rect x="0.000" y="0.560" width="0.44" height="0.44" rx="0.132" fill="#9a9a9a"/><rect x="0.560" y="0.000" width="0.44" height="0.44" rx="0.132" fill="#9a9a9a"/><rect x="0.560" y="0.560" width="0.44" height="0.44" rx="0.132" fill="#9a9a9a"/></svg>
<span style="position:absolute;top:745.6px;font-size:24px;line-height:31px;color:#555;white-space:nowrap;-webkit-text-stroke:0.22px #555;letter-spacing:0.45px;left:1240.5px;">FWCYL-521</span>
<span style="position:absolute;top:786.5px;font-size:28px;line-height:36px;color:#222;white-space:nowrap;-webkit-text-stroke:0.85px #222;letter-spacing:1.35px;left:1189.0px;">Marketplace integrations</span>
<span style="position:absolute;top:830.5px;font-size:24px;line-height:31px;color:#555;white-space:nowrap;-webkit-text-stroke:0.22px #555;letter-spacing:0.72px;left:1189.0px;">Development</span>
<div style="position:absolute;left:1194px;top:877.2px;width:157px;height:41.5px;border-radius:6px;background:#45797e"></div>
<span style="position:absolute;top:883.2px;font-size:22px;line-height:29px;color:#fff;white-space:nowrap;-webkit-text-stroke:0.25px #fff;letter-spacing:0.83px;left:272.9px;width:2000px;text-align:center;">Marketplace</span>
<div style="position:absolute;left:1148px;top:967.5px;width:520px;height:222.5px;box-sizing:border-box;border:2px solid #dcdcdc;border-radius:9px;background:#fcfcf8;box-shadow:0 1px 9px rgba(0,0,0,.07);overflow:hidden"><div style="position:absolute;left:0;top:0;bottom:0;width:10px;background:#dde7cd"></div></div>
<svg style="position:absolute;left:1195px;top:994.5px" width="21.6" height="21.6" viewBox="0 0 1 1" ><rect x="0.000" y="0.000" width="0.44" height="0.44" rx="0.132" fill="#9a9a9a"/><rect x="0.000" y="0.560" width="0.44" height="0.44" rx="0.132" fill="#9a9a9a"/><rect x="0.560" y="0.000" width="0.44" height="0.44" rx="0.132" fill="#9a9a9a"/><rect x="0.560" y="0.560" width="0.44" height="0.44" rx="0.132" fill="#9a9a9a"/></svg>
<span style="position:absolute;top:988.6px;font-size:24px;line-height:31px;color:#555;white-space:nowrap;-webkit-text-stroke:0.22px #555;letter-spacing:0.45px;left:1240.5px;">FWCYL-763</span>
<span style="position:absolute;top:1029.5px;font-size:28px;line-height:36px;color:#222;white-space:nowrap;-webkit-text-stroke:0.85px #222;letter-spacing:1.03px;left:1189.0px;">New partner challenges</span>
<span style="position:absolute;top:1073.5px;font-size:24px;line-height:31px;color:#555;white-space:nowrap;-webkit-text-stroke:0.22px #555;letter-spacing:0.72px;left:1189.0px;">Development</span>
<div style="position:absolute;left:1194px;top:1120.2px;width:147px;height:41.5px;border-radius:6px;background:#4a90d9"></div>
<span style="position:absolute;top:1126.2px;font-size:22px;line-height:29px;color:#fff;white-space:nowrap;-webkit-text-stroke:0.25px #fff;letter-spacing:0.86px;left:267.9px;width:2000px;text-align:center;">Community</span>
<div style="position:absolute;left:1349px;top:1120.2px;width:116px;height:41.5px;border-radius:6px;background:#7d4c9c"></div>
<span style="position:absolute;top:1126.2px;font-size:22px;line-height:29px;color:#fff;white-space:nowrap;-webkit-text-stroke:0.25px #fff;letter-spacing:0.61px;left:407.3px;width:2000px;text-align:center;">Partners</span>
<div style="position:absolute;left:1148px;top:1211.6px;width:520px;height:222.5px;box-sizing:border-box;border:2px solid #dcdcdc;border-radius:9px;background:#f1f4ee;box-shadow:0 1px 9px rgba(0,0,0,.07);overflow:hidden"><div style="position:absolute;left:0;top:0;bottom:0;width:10px;background:#72a348"></div></div>
<svg style="position:absolute;left:1195px;top:1238.6px" width="21.6" height="21.6" viewBox="0 0 1 1" ><rect x="0.000" y="0.000" width="0.44" height="0.44" rx="0.132" fill="#9a9a9a"/><rect x="0.000" y="0.560" width="0.44" height="0.44" rx="0.132" fill="#9a9a9a"/><rect x="0.560" y="0.000" width="0.44" height="0.44" rx="0.132" fill="#9a9a9a"/><rect x="0.560" y="0.560" width="0.44" height="0.44" rx="0.132" fill="#9a9a9a"/></svg>
<span style="position:absolute;top:1232.7px;font-size:24px;line-height:31px;color:#555;white-space:nowrap;-webkit-text-stroke:0.22px #555;letter-spacing:0.45px;left:1240.5px;">FWCYL-520</span>
<span style="position:absolute;top:1273.6px;font-size:28px;line-height:36px;color:#222;white-space:nowrap;-webkit-text-stroke:0.85px #222;letter-spacing:1.60px;left:1189.0px;">Introduce partner challenges</span>
<span style="position:absolute;top:1317.6px;font-size:24px;line-height:31px;color:#555;white-space:nowrap;-webkit-text-stroke:0.22px #555;letter-spacing:0.75px;left:1189.0px;">Shipped</span>
<div style="position:absolute;left:1194px;top:1364.3px;width:171px;height:41.5px;border-radius:6px;background:#d6505c"></div>
<span style="position:absolute;top:1370.3px;font-size:22px;line-height:29px;color:#fff;white-space:nowrap;-webkit-text-stroke:0.25px #fff;letter-spacing:1.12px;left:280.1px;width:2000px;text-align:center;">Go-to-market</span>
<div style="position:absolute;left:1373px;top:1364.3px;width:116px;height:41.5px;border-radius:6px;background:#7d4c9c"></div>
<span style="position:absolute;top:1370.3px;font-size:22px;line-height:29px;color:#fff;white-space:nowrap;-webkit-text-stroke:0.25px #fff;letter-spacing:0.61px;left:431.3px;width:2000px;text-align:center;">Partners</span>
<div style="position:absolute;left:1156px;top:1454.5px;width:504px;height:60px;box-sizing:border-box;border:2px solid #dedede;border-radius:8px;background:#f7f7f7;"></div>
<span style="position:absolute;top:1463.3px;font-size:24px;line-height:31px;color:#555;white-space:nowrap;-webkit-text-stroke:0.22px #555;letter-spacing:0.38px;left:1178.0px;">FWCYL-E-18 Partner analytics</span>
<div style="position:absolute;left:1148px;top:1504.5px;width:520px;height:222.5px;box-sizing:border-box;border:2px solid #dcdcdc;border-radius:9px;background:#f1f4ee;box-shadow:0 1px 9px rgba(0,0,0,.07);overflow:hidden"><div style="position:absolute;left:0;top:0;bottom:0;width:10px;background:#72a348"></div></div>
<svg style="position:absolute;left:1195px;top:1531.5px" width="21.6" height="21.6" viewBox="0 0 1 1" ><rect x="0.000" y="0.000" width="0.44" height="0.44" rx="0.132" fill="#9a9a9a"/><rect x="0.000" y="0.560" width="0.44" height="0.44" rx="0.132" fill="#9a9a9a"/><rect x="0.560" y="0.000" width="0.44" height="0.44" rx="0.132" fill="#9a9a9a"/><rect x="0.560" y="0.560" width="0.44" height="0.44" rx="0.132" fill="#9a9a9a"/></svg>
<span style="position:absolute;top:1525.6px;font-size:24px;line-height:31px;color:#555;white-space:nowrap;-webkit-text-stroke:0.22px #555;letter-spacing:0.45px;left:1240.5px;">FWCYL-323</span>
<span style="position:absolute;top:1566.5px;font-size:28px;line-height:36px;color:#222;white-space:nowrap;-webkit-text-stroke:0.85px #222;letter-spacing:1.30px;left:1189.0px;">Partner leaderboards</span>
<span style="position:absolute;top:1610.5px;font-size:24px;line-height:31px;color:#555;white-space:nowrap;-webkit-text-stroke:0.22px #555;letter-spacing:0.75px;left:1189.0px;">Shipped</span>
<div style="position:absolute;left:1194px;top:1657.2px;width:116px;height:41.5px;border-radius:6px;background:#7d4c9c"></div>
<span style="position:absolute;top:1663.2px;font-size:22px;line-height:29px;color:#fff;white-space:nowrap;-webkit-text-stroke:0.25px #fff;letter-spacing:0.61px;left:252.3px;width:2000px;text-align:center;">Partners</span>
<div style="position:absolute;left:1156px;top:1747px;width:504px;height:60px;box-sizing:border-box;border:2px solid #dedede;border-radius:8px;background:#f7f7f7;"></div>
<span style="position:absolute;top:1755.8px;font-size:24px;line-height:31px;color:#555;white-space:nowrap;-webkit-text-stroke:0.22px #555;letter-spacing:0.38px;left:1178.0px;">FWCYL-E-18 Partner analytics</span>
<div style="position:absolute;left:1148px;top:1797px;width:520px;height:260.8px;box-sizing:border-box;border:2px solid #dcdcdc;border-radius:9px;background:#f8f0f3;box-shadow:0 1px 9px rgba(0,0,0,.07);overflow:hidden"><div style="position:absolute;left:0;top:0;bottom:0;width:10px;background:#b97a92"></div></div>
<svg style="position:absolute;left:1195px;top:1824px" width="21.6" height="21.6" viewBox="0 0 1 1" ><rect x="0.000" y="0.000" width="0.44" height="0.44" rx="0.132" fill="#9a9a9a"/><rect x="0.000" y="0.560" width="0.44" height="0.44" rx="0.132" fill="#9a9a9a"/><rect x="0.560" y="0.000" width="0.44" height="0.44" rx="0.132" fill="#9a9a9a"/><rect x="0.560" y="0.560" width="0.44" height="0.44" rx="0.132" fill="#9a9a9a"/></svg>
<span style="position:absolute;top:1818.1px;font-size:24px;line-height:31px;color:#555;white-space:nowrap;-webkit-text-stroke:0.22px #555;letter-spacing:0.45px;left:1240.5px;">FWCYL-60</span>
<span style="position:absolute;top:1859.0px;font-size:28px;line-height:36px;color:#222;white-space:nowrap;-webkit-text-stroke:0.85px #222;letter-spacing:1.01px;left:1189.0px;">Partner page layout</span>
<span style="position:absolute;top:1896.5px;font-size:28px;line-height:36px;color:#222;white-space:nowrap;-webkit-text-stroke:0.85px #222;letter-spacing:1.39px;left:1189.0px;">customization</span>
<span style="position:absolute;top:1941.3px;font-size:24px;line-height:31px;color:#555;white-space:nowrap;-webkit-text-stroke:0.22px #555;letter-spacing:0.48px;left:1189.0px;">Design</span>
</div>
<div style="position:absolute;left:0px;top:1668px;width:3456px;height:30px;box-sizing:border-box;background:#fafafa;border-top:1px solid #e8e8e8;"></div>
<div style="position:absolute;left:8px;top:1676px;width:3300px;height:16px;box-sizing:border-box;background:#c1c1c1;border-radius:8px;"></div>
</div>
<div style="position:absolute;left:0px;top:0px;width:3456px;height:84px;box-sizing:border-box;background:#f5f5f5;border-top:2px solid #dcdcdc;border-bottom:1px solid #f1f1f1;"></div>
<span style="position:absolute;left:41px;top:9.6px;font-size:55px;line-height:66px;font-weight:700;color:#2f6fcb;letter-spacing:-0.5px;transform:scaleX(0.91) skewX(-2deg);transform-origin:left bottom;-webkit-text-stroke:2.6px #2f6fcb">Aha!</span>
<div style="position:absolute;left:204px;top:14px;width:263px;height:56px;box-sizing:border-box;background:#fff;border-radius:8px;"></div>
<span style="position:absolute;top:24.5px;font-size:26px;line-height:34px;color:#333;white-space:nowrap;-webkit-text-stroke:0.22px #333;letter-spacing:0.67px;left:224.0px;">Fredwin Cycling</span>
<svg style="position:absolute;left:431px;top:38px" width="16" height="9.5" viewBox="0 0 10 6" ><path d="M0.6 0 H9.4 Q10.4 0.3 9.7 1.1 L5.6 5.5 Q5 6.1 4.4 5.5 L0.3 1.1 Q-0.4 0.3 0.6 0 Z" fill="#000"/></svg>
<div style="position:absolute;left:1366px;top:2px;width:223px;height:82px;box-sizing:border-box;background:#fff;border-top:8px solid #2d6cca;"></div>
<span style="position:absolute;top:24.5px;font-size:26px;line-height:34px;color:#333;white-space:nowrap;-webkit-text-stroke:0.22px #333;letter-spacing:0.70px;left:558.7px;">Knowledge</span>
<span style="position:absolute;top:24.5px;font-size:26px;line-height:34px;color:#333;white-space:nowrap;-webkit-text-stroke:0.22px #333;letter-spacing:0.90px;left:814.0px;">Strategy</span>
<span style="position:absolute;top:24.5px;font-size:26px;line-height:34px;color:#333;white-space:nowrap;-webkit-text-stroke:0.22px #333;letter-spacing:-0.18px;left:1036.0px;">Releases</span>
<span style="position:absolute;top:24.5px;font-size:26px;line-height:34px;color:#333;white-space:nowrap;-webkit-text-stroke:0.22px #333;letter-spacing:0.18px;left:1258.7px;">Ideas</span>
<span style="position:absolute;top:24.5px;font-size:26px;line-height:34px;color:#333;white-space:nowrap;-webkit-text-stroke:0.22px #333;letter-spacing:0.24px;left:1443.8px;">Features</span>
<span style="position:absolute;top:24.5px;font-size:26px;line-height:34px;color:#333;white-space:nowrap;-webkit-text-stroke:0.22px #333;letter-spacing:0.22px;left:1669.5px;">Roadmaps</span>
<svg style="position:absolute;left:520px;top:28px" width="25" height="26" viewBox="0 0 25 26" ><g fill="none" stroke="#333" stroke-width="2.1" stroke-linecap="round" stroke-linejoin="round"><path d="M12.5 24.2 L2 18.6 V8 L12.5 13 L23 8 V18.6 Z M12.5 13 V24.2"/></g><circle cx="12.5" cy="4.2" r="2.6" fill="#333"/></svg>
<svg style="position:absolute;left:775px;top:28.5px" width="26" height="26" viewBox="0 0 26 26" ><g fill="none" stroke="#333" stroke-width="2.1" stroke-linecap="round" stroke-linejoin="round"><circle cx="13" cy="13" r="11.2"/><circle cx="13" cy="13" r="6.3"/></g><circle cx="13" cy="13" r="2.6" fill="#333"/></svg>
<svg style="position:absolute;left:999.5px;top:27.5px" width="23" height="27" viewBox="0 0 23 27" ><g fill="none" stroke="#333" stroke-width="2.1" stroke-linecap="round" stroke-linejoin="round"><rect x="1.6" y="5" width="19.8" height="20" rx="2.5"/><path d="M6.5 1.5V5M16.5 1.5V5M6.5 15H15M6.5 19.6H11.5"/></g><path d="M1.6 10.2 V7 Q1.6 5 4 5 H19 Q21.4 5 21.4 7 V10.2 Z" fill="#333"/></svg>
<svg style="position:absolute;left:1226px;top:29.5px" width="19" height="25" viewBox="0 0 19 25" ><g fill="none" stroke="#333" stroke-width="2.1" stroke-linecap="round" stroke-linejoin="round"><path d="M5.6 18.4 C5.6 15.6 1.6 13.8 1.6 9.4 A7.9 7.9 0 0 1 17.4 9.4 C17.4 13.8 13.4 15.6 13.4 18.4 Z"/></g><path d="M5.6 20.4 H13.4 Q13 24.2 9.5 24.2 Q6 24.2 5.6 20.4 Z" fill="#333"/></svg>
<svg style="position:absolute;left:1406.5px;top:31.5px" width="22" height="22" viewBox="0 0 22 22" ><g fill="none" stroke="#333" stroke-width="2.1" stroke-linecap="round" stroke-linejoin="round"><rect x="1.3" y="1.3" width="7" height="7" rx="1.6"/><rect x="13.7" y="1.3" width="7" height="7" rx="1.6"/><rect x="1.3" y="13.7" width="7" height="7" rx="1.6"/><rect x="13.7" y="13.7" width="7" height="7" rx="1.6"/></g></svg>
<svg style="position:absolute;left:1630.5px;top:30px" width="25" height="24" viewBox="0 0 25 24" ><g fill="none" stroke="#333" stroke-width="2.1" stroke-linecap="round" stroke-linejoin="round"><rect x="1.3" y="1.5" width="22.4" height="4.6" rx="2.3"/><rect x="1.3" y="9.7" width="12.5" height="4.6" rx="2.3"/><rect x="1.3" y="17.9" width="16" height="4.6" rx="2.3"/></g></svg>
<svg style="position:absolute;left:2991px;top:23.7px" width="36" height="36" viewBox="0 0 36 36" ><defs><clipPath id="avc"><circle cx="18" cy="18" r="18"/></clipPath><linearGradient id="avg" x1="0" y1="0" x2="0" y2="1"><stop offset="0" stop-color="#ebe5d6"/><stop offset="0.45" stop-color="#c9c0aa"/><stop offset="1" stop-color="#a89d88"/></linearGradient><filter id="avb"><feGaussianBlur stdDeviation="0.9"/></filter></defs>
<g clip-path="url(#avc)"><rect width="36" height="36" fill="url(#avg)"/><g filter="url(#avb)"><rect x="0" y="12" width="8" height="14" fill="#8d836f"/><rect x="1" y="9" width="8" height="3.5" fill="#f2eee4"/><ellipse cx="20.3" cy="23" rx="11.3" ry="19.5" fill="#4b2b1a"/><ellipse cx="26" cy="30" rx="7" ry="9" fill="#3a2015"/><ellipse cx="18.6" cy="18" rx="6.3" ry="9.4" fill="#d49b82"/><rect x="14" y="26" width="7.4" height="11" fill="#c88e77"/><ellipse cx="15.7" cy="15.6" rx="1.6" ry="0.9" fill="#6a4030"/><ellipse cx="21.6" cy="15.6" rx="1.6" ry="0.9" fill="#6a4030"/><ellipse cx="18.6" cy="23" rx="2.8" ry="0.9" fill="#b8705f"/></g></g></svg>
<svg style="position:absolute;left:3092px;top:27px" width="28" height="28" viewBox="0 0 28 28" ><g fill="none" stroke="#333" stroke-width="2.5" stroke-linecap="round" stroke-linejoin="round"><path d="M14.00 1.50 L14.49 1.52 L14.98 1.57 L15.45 1.73 L15.87 2.17 L16.16 3.16 L16.36 4.16 L16.64 4.62 L16.98 4.84 L17.32 4.99 L17.67 5.13 L18.02 5.28 L18.37 5.41 L18.76 5.50 L19.29 5.37 L20.14 4.81 L21.04 4.31 L21.65 4.29 L22.10 4.52 L22.48 4.83 L22.84 5.16 L23.17 5.52 L23.48 5.90 L23.71 6.35 L23.69 6.96 L23.19 7.86 L22.63 8.71 L22.50 9.24 L22.59 9.63 L22.72 9.98 L22.87 10.33 L23.01 10.68 L23.16 11.02 L23.38 11.36 L23.84 11.64 L24.84 11.84 L25.83 12.13 L26.27 12.55 L26.43 13.02 L26.48 13.51 L26.50 14.00 L26.48 14.49 L26.43 14.98 L26.27 15.45 L25.83 15.87 L24.84 16.16 L23.84 16.36 L23.38 16.64 L23.16 16.98 L23.01 17.32 L22.87 17.67 L22.72 18.02 L22.59 18.37 L22.50 18.76 L22.63 19.29 L23.19 20.14 L23.69 21.04 L23.71 21.65 L23.48 22.10 L23.17 22.48 L22.84 22.84 L22.48 23.17 L22.10 23.48 L21.65 23.71 L21.04 23.69 L20.14 23.19 L19.29 22.63 L18.76 22.50 L18.37 22.59 L18.02 22.72 L17.67 22.87 L17.32 23.01 L16.98 23.16 L16.64 23.38 L16.36 23.84 L16.16 24.84 L15.87 25.83 L15.45 26.27 L14.98 26.43 L14.49 26.48 L14.00 26.50 L13.51 26.48 L13.02 26.43 L12.55 26.27 L12.13 25.83 L11.84 24.84 L11.64 23.84 L11.36 23.38 L11.02 23.16 L10.68 23.01 L10.33 22.87 L9.98 22.72 L9.63 22.59 L9.24 22.50 L8.71 22.63 L7.86 23.19 L6.96 23.69 L6.35 23.71 L5.90 23.48 L5.52 23.17 L5.16 22.84 L4.83 22.48 L4.52 22.10 L4.29 21.65 L4.31 21.04 L4.81 20.14 L5.37 19.29 L5.50 18.76 L5.41 18.37 L5.28 18.02 L5.13 17.67 L4.99 17.32 L4.84 16.98 L4.62 16.64 L4.16 16.36 L3.16 16.16 L2.17 15.87 L1.73 15.45 L1.57 14.98 L1.52 14.49 L1.50 14.00 L1.52 13.51 L1.57 13.02 L1.73 12.55 L2.17 12.13 L3.16 11.84 L4.16 11.64 L4.62 11.36 L4.84 11.02 L4.99 10.68 L5.13 10.33 L5.28 9.98 L5.41 9.63 L5.50 9.24 L5.37 8.71 L4.81 7.86 L4.31 6.96 L4.29 6.35 L4.52 5.90 L4.83 5.52 L5.16 5.16 L5.52 4.83 L5.90 4.52 L6.35 4.29 L6.96 4.31 L7.86 4.81 L8.71 5.37 L9.24 5.50 L9.63 5.41 L9.98 5.28 L10.33 5.13 L10.68 4.99 L11.02 4.84 L11.36 4.62 L11.64 4.16 L11.84 3.16 L12.13 2.17 L12.55 1.73 L13.02 1.57 L13.51 1.52 Z" stroke-linejoin="round"/><circle cx="14" cy="14" r="3.6"/></g></svg>
<svg style="position:absolute;left:3184px;top:27px" width="28" height="28" viewBox="0 0 28 28" ><g fill="none" stroke="#333" stroke-width="2.5" stroke-linecap="round" stroke-linejoin="round"><circle cx="14" cy="14" r="11.6"/><path d="M10.6 11.2 A3.5 3.5 0 1 1 15.8 14.2 C14.4 15 14 15.6 14 16.6"/></g><circle cx="14" cy="20.4" r="1.7" fill="#333"/></svg>
<svg style="position:absolute;left:3276px;top:27px" width="28" height="28" viewBox="0 0 28 28" ><g fill="none" stroke="#333" stroke-width="2.5" stroke-linecap="round" stroke-linejoin="round"><circle cx="11.6" cy="11.6" r="9.4"/><path d="M18.6 18.6 L25.8 25.8"/></g></svg>
<svg style="position:absolute;left:3369px;top:30px" width="23" height="23" viewBox="0 0 23 23" ><g fill="none" stroke="#333" stroke-width="2.5" stroke-linecap="round" stroke-linejoin="round"><path d="M11.5 1.5V21.5M1.5 11.5H21.5"/></g></svg>
<div style="position:absolute;left:0;top:288px;width:3456px;height:12px;background:linear-gradient(#e2e2e2,#f4f4f4 35%,#fff)"></div>
<div style="position:absolute;left:0;top:84px;width:3456px;height:204px;background:#fff;"></div>
<span style="position:absolute;top:107.0px;font-size:56px;line-height:73px;color:#333;white-space:nowrap;-webkit-text-stroke:1.0px #333;letter-spacing:1.73px;left:32.0px;">Features board</span>
<div style="position:absolute;left:472px;top:114px;width:196px;height:60px;border-radius:8px;background:#2e6cc7"></div>
<span style="position:absolute;top:127.0px;font-size:26px;line-height:34px;color:#fff;white-space:nowrap;-webkit-text-stroke:0.4px #fff;letter-spacing:0.87px;left:-429.6px;width:2000px;text-align:center;">Add feature</span>
<div style="position:absolute;left:689px;top:114px;width:197px;height:60px;box-sizing:border-box;border:2px solid #ddd;border-radius:8px;background:#fff;"></div>
<span style="position:absolute;top:127.0px;font-size:26px;line-height:34px;color:#2e6cc7;white-space:nowrap;-webkit-text-stroke:0.3px #2e6cc7;letter-spacing:0.66px;left:-212.2px;width:2000px;text-align:center;">Add release</span>
<div style="position:absolute;left:32px;top:196px;width:191px;height:59px;box-sizing:border-box;border:2px solid #ddd;border-radius:10px;background:#fff;"></div>
<svg style="position:absolute;left:59.5px;top:210.5px" width="23" height="27" viewBox="0 0 23 27" ><rect x="0" y="0" width="23" height="26.6" rx="2.5" fill="#333"/><rect x="2" y="5.8" width="19" height="18.8" fill="#fff"/><rect x="3.6" y="8.4" width="15.8" height="6" rx="1" fill="#333"/><rect x="3.6" y="16.4" width="15.8" height="6" rx="1" fill="#333"/></svg>
<span style="position:absolute;top:209.0px;font-size:26px;line-height:34px;color:#333;white-space:nowrap;-webkit-text-stroke:0.22px #333;letter-spacing:0.12px;left:101.3px;">Board</span>
<svg style="position:absolute;left:180.5px;top:222px" width="17" height="10" viewBox="0 0 10 6" ><path d="M0.6 0 H9.4 Q10.4 0.3 9.7 1.1 L5.6 5.5 Q5 6.1 4.4 5.5 L0.3 1.1 Q-0.4 0.3 0.6 0 Z" fill="#333"/></svg>
<div style="position:absolute;left:240px;top:196px;width:116px;height:59px;box-sizing:border-box;border:2px solid #ddd;border-right:none;border-radius:10px 0 0 10px;background:#fff;"></div>
<div style="position:absolute;left:354px;top:196px;width:159px;height:59px;box-sizing:border-box;border:2px solid #aaa;border-radius:0 10px 10px 0;background:#e4e4e4;"></div>
<span style="position:absolute;top:209.0px;font-size:26px;line-height:34px;color:#333;white-space:nowrap;-webkit-text-stroke:0.22px #333;letter-spacing:0.28px;left:-702.4px;width:2000px;text-align:center;">Epics</span>
<span style="position:absolute;top:209.0px;font-size:26px;line-height:34px;color:#333;white-space:nowrap;-webkit-text-stroke:0.22px #333;letter-spacing:0.42px;left:-566.3px;width:2000px;text-align:center;">Features</span>
<div style="position:absolute;left:533px;top:196px;width:102px;height:59px;box-sizing:border-box;border:2px solid #ddd;border-radius:10px;background:#fff;"></div>
<svg style="position:absolute;left:558.5px;top:211.5px" width="27" height="27" viewBox="0 0 28 28" ><path d="M14.00 1.80 L14.48 1.81 L14.96 1.85 L15.43 1.94 L15.89 2.09 L16.30 2.42 L16.63 3.06 L16.83 3.97 L17.01 4.74 L17.26 5.18 L17.55 5.43 L17.86 5.62 L18.18 5.80 L18.50 5.97 L18.81 6.15 L19.12 6.34 L19.43 6.53 L19.76 6.69 L20.16 6.79 L20.74 6.71 L21.57 6.43 L22.43 6.21 L23.06 6.26 L23.50 6.51 L23.84 6.85 L24.13 7.23 L24.40 7.63 L24.64 8.04 L24.86 8.46 L25.06 8.90 L25.20 9.36 L25.25 9.85 L25.09 10.40 L24.57 11.02 L23.87 11.63 L23.41 12.13 L23.23 12.54 L23.19 12.91 L23.19 13.28 L23.20 13.64 L23.20 14.00 L23.20 14.36 L23.19 14.72 L23.19 15.09 L23.23 15.46 L23.41 15.87 L23.87 16.37 L24.57 16.98 L25.09 17.60 L25.25 18.15 L25.20 18.64 L25.06 19.10 L24.86 19.54 L24.64 19.96 L24.40 20.37 L24.13 20.77 L23.84 21.15 L23.50 21.49 L23.06 21.74 L22.43 21.79 L21.57 21.57 L20.74 21.29 L20.16 21.21 L19.76 21.31 L19.43 21.47 L19.12 21.66 L18.81 21.85 L18.50 22.03 L18.18 22.20 L17.86 22.38 L17.55 22.57 L17.26 22.82 L17.01 23.26 L16.83 24.03 L16.63 24.94 L16.30 25.58 L15.89 25.91 L15.43 26.06 L14.96 26.15 L14.48 26.19 L14.00 26.20 L13.52 26.19 L13.04 26.15 L12.57 26.06 L12.11 25.91 L11.70 25.58 L11.37 24.94 L11.17 24.03 L10.99 23.26 L10.74 22.82 L10.45 22.57 L10.14 22.38 L9.82 22.20 L9.50 22.03 L9.19 21.85 L8.88 21.66 L8.57 21.47 L8.24 21.31 L7.84 21.21 L7.26 21.29 L6.43 21.57 L5.57 21.79 L4.94 21.74 L4.50 21.49 L4.16 21.15 L3.87 20.77 L3.60 20.37 L3.36 19.96 L3.14 19.54 L2.94 19.10 L2.80 18.64 L2.75 18.15 L2.91 17.60 L3.43 16.98 L4.13 16.37 L4.59 15.87 L4.77 15.46 L4.81 15.09 L4.81 14.72 L4.80 14.36 L4.80 14.00 L4.80 13.64 L4.81 13.28 L4.81 12.91 L4.77 12.54 L4.59 12.13 L4.13 11.63 L3.43 11.02 L2.91 10.40 L2.75 9.85 L2.80 9.36 L2.94 8.90 L3.14 8.46 L3.36 8.04 L3.60 7.63 L3.87 7.23 L4.16 6.85 L4.50 6.51 L4.94 6.26 L5.57 6.21 L6.43 6.43 L7.26 6.71 L7.84 6.79 L8.24 6.69 L8.57 6.53 L8.88 6.34 L9.19 6.15 L9.50 5.97 L9.82 5.80 L10.14 5.62 L10.45 5.43 L10.74 5.18 L10.99 4.74 L11.17 3.97 L11.37 3.06 L11.70 2.42 L12.11 2.09 L12.57 1.94 L13.04 1.85 L13.52 1.81 Z" fill="#333" stroke="#333" stroke-width="3.2" stroke-linejoin="round"/><circle cx="14" cy="14" r="4.4" fill="#fff"/></svg>
<svg style="position:absolute;left:592.5px;top:221.8px" width="17" height="10.5" viewBox="0 0 10 6" ><path d="M0.6 0 H9.4 Q10.4 0.3 9.7 1.1 L5.6 5.5 Q5 6.1 4.4 5.5 L0.3 1.1 Q-0.4 0.3 0.6 0 Z" fill="#333"/></svg>
<div style="position:absolute;left:651px;top:196px;width:225px;height:59px;box-sizing:border-box;border:2px solid #ddd;border-radius:10px;background:#fff;"></div>
<span style="position:absolute;top:209.0px;font-size:26px;line-height:34px;color:#333;white-space:nowrap;-webkit-text-stroke:0.22px #333;letter-spacing:0.21px;left:673.0px;">Releases: All</span>
<svg style="position:absolute;left:841.2px;top:214px" width="12" height="24" viewBox="0 0 12 24" ><path d="M6 1.2 L11.4 9 H0.6 Z M6 22.8 L11.4 15 H0.6 Z" fill="#555" stroke="#555" stroke-width="0.8" stroke-linejoin="round"/></svg>
<div style="position:absolute;left:892px;top:196px;width:78px;height:59px;box-sizing:border-box;border:2px solid #ddd;border-radius:10px;background:#fff;"></div>
<svg style="position:absolute;left:916.5px;top:213.3px" width="28" height="24" viewBox="0 0 29 24" ><path d="M1.6 1.2 H27.4 Q28.6 1.6 27.8 2.8 L17.6 13.4 V21.6 Q17.2 23.2 15.8 22.4 L11.8 19.6 Q11.4 19.2 11.4 18.6 V13.4 L1.2 2.8 Q0.4 1.6 1.6 1.2 Z" fill="#333"/></svg>
<div style="position:absolute;left:3176px;top:114px;width:150px;height:60px;box-sizing:border-box;border:2px solid #ddd;border-radius:10px;background:#fff;"></div>
<div style="position:absolute;left:3346px;top:114px;width:78px;height:60px;box-sizing:border-box;border:2px solid #ddd;border-radius:10px;background:#fff;"></div>
<div style="position:absolute;left:1466px;top:122px;width:1988px;height:1864px;background:#fff;border-top:6px solid #2459a4;border-radius:5px 0 0 0;box-sizing:border-box;box-shadow:-2px 0 24px rgba(0,0,0,.19)"></div>
<div style="position:absolute;left:3454px;top:122px;width:2px;height:1864px;box-sizing:border-box;background:#dedede;"></div>
<div style="position:absolute;left:3424px;top:322px;width:30px;height:1662px;box-sizing:border-box;background:#fafafa;border-left:2px solid #e9e9e9;border-right:2px solid #e9e9e9;"></div>
<div style="position:absolute;left:3432px;top:732px;width:15px;height:854px;box-sizing:border-box;background:#c1c1c1;border-radius:8px;"></div>
<div style="position:absolute;left:1518px;top:174px;width:34px;height:34px;border-radius:50%;background:#6b6b6b"></div>
<svg style="position:absolute;left:1526.5px;top:181px" width="17" height="19" viewBox="0 0 17 19" ><path d="M2 3 H15 Q17 3 17 5 V17 Q17 19 15 19 H2 Q0 19 0 17 V5 Q0 3 2 3 Z M3.2 0.4 H5.4 V3 H3.2 Z M11.6 0.4 H13.8 V3 H11.6 Z" fill="#fff"/><rect x="0" y="6.6" width="17" height="1.2" fill="#6b6b6b"/><rect x="4.4" y="10" width="8.4" height="1.7" fill="#6b6b6b"/><rect x="4.4" y="13.4" width="4.6" height="1.7" fill="#6b6b6b"/></svg>
<span style="position:absolute;top:172.7px;font-size:28px;line-height:36px;color:#333;white-space:nowrap;font-weight:700;letter-spacing:-0.12px;left:1563.5px;">Release</span>
<span style="position:absolute;top:175.5px;font-size:24px;line-height:31px;color:#999;white-space:nowrap;-webkit-text-stroke:0.22px #999;letter-spacing:0.10px;left:1679.5px;">FWCYL-R-67</span>
<span style="position:absolute;top:241.3px;font-size:48px;line-height:62px;color:#333;white-space:nowrap;font-weight:700;letter-spacing:0.04px;left:1516.0px;">Social rides</span>
<div style="position:absolute;left:2746px;top:169px;width:147px;height:44px;border-radius:8px;background:#2e6cc7"></div>
<span style="position:absolute;top:176.5px;font-size:22.5px;line-height:29px;color:#fff;white-space:nowrap;-webkit-text-stroke:0.4px #fff;letter-spacing:0.16px;left:1819.6px;width:2000px;text-align:center;">Ship release</span>
<div style="position:absolute;left:2909px;top:169px;width:168px;height:44px;box-sizing:border-box;border:2px solid #ddd;border-radius:8px;background:#fff;"></div>
<span style="position:absolute;top:176.5px;font-size:22.5px;line-height:29px;color:#333;white-space:nowrap;-webkit-text-stroke:0.22px #333;letter-spacing:0.37px;left:1993.2px;width:2000px;text-align:center;">View progress</span>
<div style="position:absolute;left:3093px;top:169px;width:111px;height:44px;box-sizing:border-box;border:2px solid #ddd;border-radius:8px;background:#fff;"></div>
<span style="position:absolute;top:176.5px;font-size:22.5px;line-height:29px;color:#333;white-space:nowrap;-webkit-text-stroke:0.22px #333;letter-spacing:0.17px;left:3103.5px;">Details</span>
<svg style="position:absolute;left:3181px;top:181.5px" width="12" height="19" viewBox="0 0 12 19" ><path d="M2.5 2 L9.5 9.5 L2.5 17" fill="none" stroke="#333" stroke-width="2.6" stroke-linecap="round" stroke-linejoin="round"/></svg>
<div style="position:absolute;left:3220px;top:169px;width:44px;height:44px;box-sizing:border-box;border:2px solid #ddd;border-radius:8px;background:#fff;"></div>
<svg style="position:absolute;left:3232px;top:178px" width="20" height="24" viewBox="0 0 20 24" ><g fill="none" stroke="#333" stroke-width="2.2" stroke-linecap="round" stroke-linejoin="round"><path d="M10 1.6 V14.6 M5.4 5.8 L10 1.4 L14.6 5.8"/><path d="M6 9.6 H4 Q2 9.6 2 11.6 V20.4 Q2 22.4 4 22.4 H16 Q18 22.4 18 20.4 V11.6 Q18 9.6 16 9.6 H14"/></g></svg>
<div style="position:absolute;left:3280px;top:169px;width:44px;height:44px;box-sizing:border-box;border:2px solid #ddd;border-radius:8px;background:#fff;"></div>
<div style="position:absolute;left:3292.5px;top:188.8px;width:4.6px;height:4.6px;box-sizing:border-box;background:#333;border-radius:50%;"></div>
<div style="position:absolute;left:3299.1px;top:188.8px;width:4.6px;height:4.6px;box-sizing:border-box;background:#333;border-radius:50%;"></div>
<div style="position:absolute;left:3305.7px;top:188.8px;width:4.6px;height:4.6px;box-sizing:border-box;background:#333;border-radius:50%;"></div>
<div style="position:absolute;left:3340px;top:169px;width:64px;height:44px;box-sizing:border-box;border:2px solid #ddd;border-radius:8px;background:#fff;"></div>
<svg style="position:absolute;left:3365px;top:184px" width="14" height="14" viewBox="0 0 14 14" ><path d="M1.6 1.6 L12.4 12.4 M12.4 1.6 L1.6 12.4" stroke="#222" stroke-width="2.8" stroke-linecap="round"/></svg>
<div style="position:absolute;left:1466px;top:406px;width:1958px;height:2px;box-sizing:border-box;background:#e6e6e6;"></div>
<span style="position:absolute;top:343.5px;font-size:30px;line-height:39px;color:#959595;white-space:nowrap;font-weight:700;transform:scaleX(0.9184);transform-origin:left center;left:1516.0px;">OVERVIEW</span>
<span style="position:absolute;top:343.5px;font-size:30px;line-height:39px;color:#959595;white-space:nowrap;font-weight:700;transform:scaleX(0.8997);transform-origin:left center;left:1725.0px;">PHASES</span>
<span style="position:absolute;top:343.5px;font-size:30px;line-height:39px;color:#959595;white-space:nowrap;font-weight:700;transform:scaleX(0.9486);transform-origin:left center;left:1945.0px;">COMMENTS</span>
<span style="position:absolute;top:343.5px;font-size:30px;line-height:39px;color:#959595;white-space:nowrap;font-weight:700;transform:scaleX(0.9559);transform-origin:left center;left:2173.0px;">TO-DOS</span>
<span style="position:absolute;top:343.5px;font-size:30px;line-height:39px;color:#2e6cc7;white-space:nowrap;font-weight:700;transform:scaleX(0.8820);transform-origin:left center;left:2345.0px;">RELATED</span>
<span style="position:absolute;top:343.5px;font-size:30px;line-height:39px;color:#959595;white-space:nowrap;font-weight:700;transform:scaleX(0.9339);transform-origin:left center;left:2590.0px;">HISTORY</span>
<span style="position:absolute;top:343.5px;font-size:30px;line-height:39px;color:#959595;white-space:nowrap;font-weight:700;transform:scaleX(0.8781);transform-origin:left center;left:2773.0px;">RELEASES</span>
<span style="position:absolute;top:343.5px;font-size:30px;line-height:39px;color:#959595;white-space:nowrap;font-weight:700;transform:scaleX(0.8969);transform-origin:left center;left:2975.0px;">RESEARCH</span>
<div style="position:absolute;left:1846px;top:347.5px;width:37px;height:35px;box-sizing:border-box;background:#eee;border-radius:18px;"></div>
<span style="position:absolute;top:349.5px;font-size:24px;line-height:31px;color:#555;white-space:nowrap;font-weight:700;left:864.5px;width:2000px;text-align:center;">8</span>
<div style="position:absolute;left:2478px;top:347.5px;width:52px;height:35px;box-sizing:border-box;background:#dbe8fa;border-radius:18px;"></div>
<span style="position:absolute;top:349.5px;font-size:24px;line-height:31px;color:#2e6cc7;white-space:nowrap;font-weight:700;left:1504.0px;width:2000px;text-align:center;">27</span>
<div style="position:absolute;left:2344px;top:402px;width:186px;height:6px;box-sizing:border-box;background:#2e6cc7;"></div>
<span style="position:absolute;top:407.5px;font-size:26px;line-height:34px;color:#999;white-space:nowrap;-webkit-text-stroke:0.22px #999;letter-spacing:0.89px;right:82.1px;">View in report</span>
<span style="position:absolute;top:503.0px;font-size:33px;line-height:43px;color:#333;white-space:nowrap;-webkit-text-stroke:0.22px #333;letter-spacing:-0.03px;left:1516.0px;">Features</span>
<div style="position:absolute;left:1666px;top:509px;width:54px;height:36px;box-sizing:border-box;background:#eee;border-radius:18px;"></div>
<span style="position:absolute;top:510.3px;font-size:24px;line-height:31px;color:#555;white-space:nowrap;font-weight:700;letter-spacing:0.50px;left:693.2px;width:2000px;text-align:center;">24</span>
<svg style="position:absolute;left:1739.5px;top:510.3px" width="27" height="27" viewBox="0 0 27 27" ><circle cx="13.5" cy="13.5" r="11.6" fill="none" stroke="#2e6cc7" stroke-width="2.2"/><path d="M13.5 8.6V18.4M8.6 13.5H18.4" stroke="#2e6cc7" stroke-width="2.1" stroke-linecap="round"/></svg>
<span style="position:absolute;top:507.5px;font-size:27px;line-height:35px;color:#2e6cc7;white-space:nowrap;-webkit-text-stroke:0.22px #2e6cc7;letter-spacing:-0.02px;left:1775.0px;">Add</span>
<span style="position:absolute;top:507.5px;font-size:27px;line-height:35px;color:#2e6cc7;white-space:nowrap;-webkit-text-stroke:0.22px #2e6cc7;letter-spacing:0.34px;left:3199.0px;">Status All</span>
<svg style="position:absolute;left:3323px;top:521.5px" width="17" height="10" viewBox="0 0 10 6" ><path d="M0.6 0 H9.4 Q10.4 0.3 9.7 1.1 L5.6 5.5 Q5 6.1 4.4 5.5 L0.3 1.1 Q-0.4 0.3 0.6 0 Z" fill="#2e6cc7"/></svg>
<div style="position:absolute;left:1516px;top:581px;width:1859px;height:1500px;box-sizing:border-box;border:2px solid #d2d2d2;border-bottom:none"></div>
<div style="position:absolute;left:1978px;top:582px;width:2px;height:1404px;box-sizing:border-box;background:#d2d2d2;"></div>
<div style="position:absolute;left:2891px;top:582px;width:2px;height:1404px;box-sizing:border-box;background:#d2d2d2;"></div>
<span style="position:absolute;top:592.5px;font-size:26px;line-height:34px;color:#555;white-space:nowrap;-webkit-text-stroke:0.22px #555;letter-spacing:0.58px;left:1550.0px;">Reference #</span>
<span style="position:absolute;top:592.5px;font-size:26px;line-height:34px;color:#555;white-space:nowrap;-webkit-text-stroke:0.22px #555;letter-spacing:0.41px;left:2000.0px;">Name</span>
<span style="position:absolute;top:592.5px;font-size:26px;line-height:34px;color:#555;white-space:nowrap;-webkit-text-stroke:0.22px #555;letter-spacing:0.71px;left:2913.0px;">Status</span>
<div style="position:absolute;left:1516px;top:638px;width:1859px;height:2px;box-sizing:border-box;background:#d2d2d2;"></div>
<div style="position:absolute;left:1550px;top:656px;width:228.0px;height:38px;box-sizing:border-box;border:2px solid #f6e2a4;border-radius:19px;background:#f8ebc4"></div>
<svg style="position:absolute;left:1571.2px;top:659.6px" width="26.5" height="26.5" viewBox="0 0 24 24" ><g fill="#333" stroke="#333" stroke-linecap="round">
<path d="M7.4 6.6 A4.6 4.9 0 0 1 16.6 6.6 Z" stroke-width="0.5"/>
<path d="M5.6 8.6 H11.5 V22.2 Q5.6 21.4 5.6 15.4 Z M12.5 8.6 H18.4 V15.4 Q18.4 21.4 12.5 22.2 Z" stroke-width="0.5"/>
<g stroke-width="2.7" fill="none"><path d="M5.6 9.8 L2.2 6.4 M18.4 9.8 L21.8 6.4 M5.6 14.2 H1.6 M18.4 14.2 H22.4 M6.2 18.8 L2.8 22.2 M17.8 18.8 L21.2 22.2"/></g>
</g></svg>
<span style="position:absolute;top:657.4px;font-size:26px;line-height:34px;color:#333;white-space:nowrap;-webkit-text-stroke:0.22px #333;letter-spacing:0.22px;left:1611.5px;">FWCYL-885</span>
<span style="position:absolute;top:656.0px;font-size:26px;line-height:34px;color:#2e6cc7;white-space:nowrap;-webkit-text-stroke:0.22px #2e6cc7;letter-spacing:0.62px;left:2000.0px;">Club Member List Sync Issue</span>
<div style="position:absolute;left:3096px;top:658px;width:254px;height:39px;border-radius:7px;background:#fae3c3"></div>
<span style="position:absolute;top:660.5px;font-size:26px;line-height:34px;color:#333;white-space:nowrap;-webkit-text-stroke:0.22px #333;letter-spacing:0.66px;left:2223.3px;width:2000px;text-align:center;">Ready to develop</span>
<div style="position:absolute;left:1516px;top:715px;width:1859px;height:2px;box-sizing:border-box;background:#d2d2d2;"></div>
<div style="position:absolute;left:1550px;top:733px;width:233.0px;height:38px;box-sizing:border-box;border:2px solid #f6e2a4;border-radius:19px;background:#f8ebc4"></div>
<svg style="position:absolute;left:1572px;top:737.4px" width="28.5" height="28.5" viewBox="0 0 24 23" ><path d="M12 1.6 L15.1 8.1 L22.2 9 L17 13.9 L18.4 21 L12 17.5 L5.6 21 L7 13.9 L1.8 9 L8.9 8.1 Z" fill="#333" stroke="#333" stroke-width="2.2" stroke-linejoin="round"/></svg>
<span style="position:absolute;top:734.4px;font-size:26px;line-height:34px;color:#333;white-space:nowrap;-webkit-text-stroke:0.22px #333;letter-spacing:0.33px;left:1615.5px;">FWCYL-884</span>
<span style="position:absolute;top:733.0px;font-size:26px;line-height:34px;color:#2e6cc7;white-space:nowrap;-webkit-text-stroke:0.22px #2e6cc7;letter-spacing:0.76px;left:2000.0px;">Monthly Leaderboard Reset Option</span>
<div style="position:absolute;left:3225px;top:735px;width:125px;height:39px;border-radius:7px;background:#e4cfd9"></div>
<span style="position:absolute;top:737.5px;font-size:26px;line-height:34px;color:#333;white-space:nowrap;-webkit-text-stroke:0.22px #333;letter-spacing:0.51px;left:2287.8px;width:2000px;text-align:center;">Design</span>
<div style="position:absolute;left:1516px;top:792px;width:1859px;height:2px;box-sizing:border-box;background:#d2d2d2;"></div>
<div style="position:absolute;left:1550px;top:810px;width:229.0px;height:38px;box-sizing:border-box;border:2px solid #f6e2a4;border-radius:19px;background:#f8ebc4"></div>
<svg style="position:absolute;left:1572.5px;top:816.7px" width="23" height="23" viewBox="0 0 1 1" ><rect x="0.000" y="0.000" width="0.44" height="0.44" rx="0.158" fill="#333"/><rect x="0.000" y="0.560" width="0.44" height="0.44" rx="0.158" fill="#333"/><rect x="0.560" y="0.000" width="0.44" height="0.44" rx="0.158" fill="#333"/><rect x="0.560" y="0.560" width="0.44" height="0.44" rx="0.158" fill="#333"/></svg>
<span style="position:absolute;top:811.4px;font-size:26px;line-height:34px;color:#333;white-space:nowrap;-webkit-text-stroke:0.22px #333;letter-spacing:0.33px;left:1611.5px;">FWCYL-883</span>
<span style="position:absolute;top:810.0px;font-size:26px;line-height:34px;color:#2e6cc7;white-space:nowrap;-webkit-text-stroke:0.22px #2e6cc7;letter-spacing:0.81px;left:2000.0px;">In-App Virtual Team Trophies</span>
<div style="position:absolute;left:3143px;top:812px;width:207px;height:39px;border-radius:7px;background:#e3efc9"></div>
<span style="position:absolute;top:814.5px;font-size:26px;line-height:34px;color:#333;white-space:nowrap;-webkit-text-stroke:0.22px #333;letter-spacing:0.54px;left:2246.8px;width:2000px;text-align:center;">Ready to ship</span>
<div style="position:absolute;left:1516px;top:869px;width:1859px;height:2px;box-sizing:border-box;background:#d2d2d2;"></div>
<div style="position:absolute;left:1550px;top:887px;width:228.0px;height:38px;box-sizing:border-box;border:2px solid #f6e2a4;border-radius:19px;background:#f8ebc4"></div>
<svg style="position:absolute;left:1572.5px;top:893.7px" width="23" height="23" viewBox="0 0 1 1" ><rect x="0.000" y="0.000" width="0.44" height="0.44" rx="0.158" fill="#333"/><rect x="0.000" y="0.560" width="0.44" height="0.44" rx="0.158" fill="#333"/><rect x="0.560" y="0.000" width="0.44" height="0.44" rx="0.158" fill="#333"/><rect x="0.560" y="0.560" width="0.44" height="0.44" rx="0.158" fill="#333"/></svg>
<span style="position:absolute;top:888.4px;font-size:26px;line-height:34px;color:#333;white-space:nowrap;-webkit-text-stroke:0.22px #333;letter-spacing:0.22px;left:1611.5px;">FWCYL-882</span>
<span style="position:absolute;top:887.0px;font-size:26px;line-height:34px;color:#2e6cc7;white-space:nowrap;-webkit-text-stroke:0.22px #2e6cc7;letter-spacing:0.57px;left:2000.0px;">Team Ride Badges &amp; Achievements</span>
<div style="position:absolute;left:3148px;top:889px;width:202px;height:39px;border-radius:7px;background:#f3f6ea"></div>
<span style="position:absolute;top:891.5px;font-size:26px;line-height:34px;color:#333;white-space:nowrap;-webkit-text-stroke:0.22px #333;letter-spacing:0.71px;left:2249.4px;width:2000px;text-align:center;">Development</span>
<div style="position:absolute;left:1516px;top:946px;width:1859px;height:2px;box-sizing:border-box;background:#d2d2d2;"></div>
<div style="position:absolute;left:1550px;top:964px;width:225.0px;height:38px;box-sizing:border-box;border:2px solid #f6e2a4;border-radius:19px;background:#f8ebc4"></div>
<svg style="position:absolute;left:1572.5px;top:970.7px" width="23" height="23" viewBox="0 0 1 1" ><rect x="0.000" y="0.000" width="0.44" height="0.44" rx="0.158" fill="#333"/><rect x="0.000" y="0.560" width="0.44" height="0.44" rx="0.158" fill="#333"/><rect x="0.560" y="0.000" width="0.44" height="0.44" rx="0.158" fill="#333"/><rect x="0.560" y="0.560" width="0.44" height="0.44" rx="0.158" fill="#333"/></svg>
<span style="position:absolute;top:965.4px;font-size:26px;line-height:34px;color:#333;white-space:nowrap;-webkit-text-stroke:0.22px #333;letter-spacing:-0.12px;left:1611.5px;">FWCYL-881</span>
<span style="position:absolute;top:964.0px;font-size:26px;line-height:34px;color:#2e6cc7;white-space:nowrap;-webkit-text-stroke:0.22px #2e6cc7;letter-spacing:0.66px;left:2000.0px;">Team Streaks Tracker</span>
<div style="position:absolute;left:3143px;top:966px;width:207px;height:39px;border-radius:7px;background:#e3efc9"></div>
<span style="position:absolute;top:968.5px;font-size:26px;line-height:34px;color:#333;white-space:nowrap;-webkit-text-stroke:0.22px #333;letter-spacing:0.54px;left:2246.8px;width:2000px;text-align:center;">Ready to ship</span>
<div style="position:absolute;left:1516px;top:1023px;width:1859px;height:2px;box-sizing:border-box;background:#d2d2d2;"></div>
<div style="position:absolute;left:1550px;top:1041px;width:229.0px;height:38px;box-sizing:border-box;border:2px solid #f6e2a4;border-radius:19px;background:#f8ebc4"></div>
<svg style="position:absolute;left:1572.5px;top:1047.7px" width="23" height="23" viewBox="0 0 1 1" ><rect x="0.000" y="0.000" width="0.44" height="0.44" rx="0.158" fill="#333"/><rect x="0.000" y="0.560" width="0.44" height="0.44" rx="0.158" fill="#333"/><rect x="0.560" y="0.000" width="0.44" height="0.44" rx="0.158" fill="#333"/><rect x="0.560" y="0.560" width="0.44" height="0.44" rx="0.158" fill="#333"/></svg>
<span style="position:absolute;top:1042.4px;font-size:26px;line-height:34px;color:#333;white-space:nowrap;-webkit-text-stroke:0.22px #333;letter-spacing:0.33px;left:1611.5px;">FWCYL-880</span>
<span style="position:absolute;top:1041.0px;font-size:26px;line-height:34px;color:#2e6cc7;white-space:nowrap;-webkit-text-stroke:0.22px #2e6cc7;letter-spacing:0.61px;left:2000.0px;">Cycling Clubs &amp; Communities</span>
<div style="position:absolute;left:3096px;top:1043px;width:254px;height:39px;border-radius:7px;background:#fae3c3"></div>
<span style="position:absolute;top:1045.5px;font-size:26px;line-height:34px;color:#333;white-space:nowrap;-webkit-text-stroke:0.22px #333;letter-spacing:0.66px;left:2223.3px;width:2000px;text-align:center;">Ready to develop</span>
<div style="position:absolute;left:1516px;top:1100px;width:1859px;height:2px;box-sizing:border-box;background:#d2d2d2;"></div>
<div style="position:absolute;left:1550px;top:1118px;width:228.0px;height:38px;box-sizing:border-box;border:2px solid #f6e2a4;border-radius:19px;background:#f8ebc4"></div>
<svg style="position:absolute;left:1572.5px;top:1124.7px" width="23" height="23" viewBox="0 0 1 1" ><rect x="0.000" y="0.000" width="0.44" height="0.44" rx="0.158" fill="#333"/><rect x="0.000" y="0.560" width="0.44" height="0.44" rx="0.158" fill="#333"/><rect x="0.560" y="0.000" width="0.44" height="0.44" rx="0.158" fill="#333"/><rect x="0.560" y="0.560" width="0.44" height="0.44" rx="0.158" fill="#333"/></svg>
<span style="position:absolute;top:1119.4px;font-size:26px;line-height:34px;color:#333;white-space:nowrap;-webkit-text-stroke:0.22px #333;letter-spacing:0.22px;left:1611.5px;">FWCYL-879</span>
<span style="position:absolute;top:1118.0px;font-size:26px;line-height:34px;color:#2e6cc7;white-space:nowrap;-webkit-text-stroke:0.22px #2e6cc7;letter-spacing:0.84px;left:2000.0px;">In-App Messaging</span>
<div style="position:absolute;left:3225px;top:1120px;width:125px;height:39px;border-radius:7px;background:#e4cfd9"></div>
<span style="position:absolute;top:1122.5px;font-size:26px;line-height:34px;color:#333;white-space:nowrap;-webkit-text-stroke:0.22px #333;letter-spacing:0.51px;left:2287.8px;width:2000px;text-align:center;">Design</span>
<div style="position:absolute;left:1516px;top:1177px;width:1859px;height:2px;box-sizing:border-box;background:#d2d2d2;"></div>
<div style="position:absolute;left:1550px;top:1195px;width:231.0px;height:38px;box-sizing:border-box;border:2px solid #f6e2a4;border-radius:19px;background:#f8ebc4"></div>
<svg style="position:absolute;left:1572px;top:1199.4px" width="28.5" height="28.5" viewBox="0 0 24 23" ><path d="M12 1.6 L15.1 8.1 L22.2 9 L17 13.9 L18.4 21 L12 17.5 L5.6 21 L7 13.9 L1.8 9 L8.9 8.1 Z" fill="#333" stroke="#333" stroke-width="2.2" stroke-linejoin="round"/></svg>
<span style="position:absolute;top:1196.4px;font-size:26px;line-height:34px;color:#333;white-space:nowrap;-webkit-text-stroke:0.22px #333;letter-spacing:0.11px;left:1615.5px;">FWCYL-878</span>
<span style="position:absolute;top:1195.0px;font-size:26px;line-height:34px;color:#2e6cc7;white-space:nowrap;-webkit-text-stroke:0.22px #2e6cc7;letter-spacing:0.75px;left:2000.0px;">Customizable Privacy Settings</span>
<div style="position:absolute;left:3096px;top:1197px;width:254px;height:39px;border-radius:7px;background:#fae3c3"></div>
<span style="position:absolute;top:1199.5px;font-size:26px;line-height:34px;color:#333;white-space:nowrap;-webkit-text-stroke:0.22px #333;letter-spacing:0.66px;left:2223.3px;width:2000px;text-align:center;">Ready to develop</span>
<div style="position:absolute;left:1516px;top:1254px;width:1859px;height:2px;box-sizing:border-box;background:#d2d2d2;"></div>
<div style="position:absolute;left:1550px;top:1272px;width:226.0px;height:38px;box-sizing:border-box;border:2px solid #f6e2a4;border-radius:19px;background:#f8ebc4"></div>
<svg style="position:absolute;left:1572.5px;top:1278.7px" width="23" height="23" viewBox="0 0 1 1" ><rect x="0.000" y="0.000" width="0.44" height="0.44" rx="0.158" fill="#333"/><rect x="0.000" y="0.560" width="0.44" height="0.44" rx="0.158" fill="#333"/><rect x="0.560" y="0.000" width="0.44" height="0.44" rx="0.158" fill="#333"/><rect x="0.560" y="0.560" width="0.44" height="0.44" rx="0.158" fill="#333"/></svg>
<span style="position:absolute;top:1273.4px;font-size:26px;line-height:34px;color:#333;white-space:nowrap;-webkit-text-stroke:0.22px #333;letter-spacing:-0.01px;left:1611.5px;">FWCYL-877</span>
<span style="position:absolute;top:1272.0px;font-size:26px;line-height:34px;color:#2e6cc7;white-space:nowrap;-webkit-text-stroke:0.22px #2e6cc7;letter-spacing:0.62px;left:2000.0px;">Local Rider Discoverability</span>
<div style="position:absolute;left:3143px;top:1274px;width:207px;height:39px;border-radius:7px;background:#e3efc9"></div>
<span style="position:absolute;top:1276.5px;font-size:26px;line-height:34px;color:#333;white-space:nowrap;-webkit-text-stroke:0.22px #333;letter-spacing:0.54px;left:2246.8px;width:2000px;text-align:center;">Ready to ship</span>
<div style="position:absolute;left:1516px;top:1331px;width:1859px;height:2px;box-sizing:border-box;background:#d2d2d2;"></div>
<div style="position:absolute;left:1550px;top:1349px;width:228.0px;height:38px;box-sizing:border-box;border:2px solid #f6e2a4;border-radius:19px;background:#f8ebc4"></div>
<svg style="position:absolute;left:1572.5px;top:1355.7px" width="23" height="23" viewBox="0 0 1 1" ><rect x="0.000" y="0.000" width="0.44" height="0.44" rx="0.158" fill="#333"/><rect x="0.000" y="0.560" width="0.44" height="0.44" rx="0.158" fill="#333"/><rect x="0.560" y="0.000" width="0.44" height="0.44" rx="0.158" fill="#333"/><rect x="0.560" y="0.560" width="0.44" height="0.44" rx="0.158" fill="#333"/></svg>
<span style="position:absolute;top:1350.4px;font-size:26px;line-height:34px;color:#333;white-space:nowrap;-webkit-text-stroke:0.22px #333;letter-spacing:0.22px;left:1611.5px;">FWCYL-876</span>
<span style="position:absolute;top:1349.0px;font-size:26px;line-height:34px;color:#2e6cc7;white-space:nowrap;-webkit-text-stroke:0.22px #2e6cc7;letter-spacing:0.48px;left:2000.0px;">Invite a Friend</span>
<div style="position:absolute;left:3148px;top:1351px;width:202px;height:39px;border-radius:7px;background:#f3f6ea"></div>
<span style="position:absolute;top:1353.5px;font-size:26px;line-height:34px;color:#333;white-space:nowrap;-webkit-text-stroke:0.22px #333;letter-spacing:0.71px;left:2249.4px;width:2000px;text-align:center;">Development</span>
<div style="position:absolute;left:1516px;top:1408px;width:1859px;height:2px;box-sizing:border-box;background:#d2d2d2;"></div>
<div style="position:absolute;left:1550px;top:1426px;width:231.0px;height:38px;box-sizing:border-box;border:2px solid #f6e2a4;border-radius:19px;background:#f8ebc4"></div>
<svg style="position:absolute;left:1572px;top:1430.4px" width="28.5" height="28.5" viewBox="0 0 24 23" ><path d="M12 1.6 L15.1 8.1 L22.2 9 L17 13.9 L18.4 21 L12 17.5 L5.6 21 L7 13.9 L1.8 9 L8.9 8.1 Z" fill="#333" stroke="#333" stroke-width="2.2" stroke-linejoin="round"/></svg>
<span style="position:absolute;top:1427.4px;font-size:26px;line-height:34px;color:#333;white-space:nowrap;-webkit-text-stroke:0.22px #333;letter-spacing:0.11px;left:1615.5px;">FWCYL-875</span>
<span style="position:absolute;top:1426.0px;font-size:26px;line-height:34px;color:#2e6cc7;white-space:nowrap;-webkit-text-stroke:0.22px #2e6cc7;letter-spacing:0.79px;left:2000.0px;">Comments</span>
<div style="position:absolute;left:3148px;top:1428px;width:202px;height:39px;border-radius:7px;background:#f3f6ea"></div>
<span style="position:absolute;top:1430.5px;font-size:26px;line-height:34px;color:#333;white-space:nowrap;-webkit-text-stroke:0.22px #333;letter-spacing:0.71px;left:2249.4px;width:2000px;text-align:center;">Development</span>
<div style="position:absolute;left:1516px;top:1485px;width:1859px;height:2px;box-sizing:border-box;background:#d2d2d2;"></div>
<div style="position:absolute;left:1550px;top:1503px;width:231.0px;height:38px;box-sizing:border-box;border:2px solid #f6e2a4;border-radius:19px;background:#f8ebc4"></div>
<svg style="position:absolute;left:1572px;top:1507.4px" width="28.5" height="28.5" viewBox="0 0 24 23" ><path d="M12 1.6 L15.1 8.1 L22.2 9 L17 13.9 L18.4 21 L12 17.5 L5.6 21 L7 13.9 L1.8 9 L8.9 8.1 Z" fill="#333" stroke="#333" stroke-width="2.2" stroke-linejoin="round"/></svg>
<span style="position:absolute;top:1504.4px;font-size:26px;line-height:34px;color:#333;white-space:nowrap;-webkit-text-stroke:0.22px #333;letter-spacing:0.11px;left:1615.5px;">FWCYL-874</span>
<span style="position:absolute;top:1503.0px;font-size:26px;line-height:34px;color:#2e6cc7;white-space:nowrap;-webkit-text-stroke:0.22px #2e6cc7;letter-spacing:0.25px;left:2000.0px;">Kudos</span>
<div style="position:absolute;left:3225px;top:1505px;width:125px;height:39px;border-radius:7px;background:#e4cfd9"></div>
<span style="position:absolute;top:1507.5px;font-size:26px;line-height:34px;color:#333;white-space:nowrap;-webkit-text-stroke:0.22px #333;letter-spacing:0.51px;left:2287.8px;width:2000px;text-align:center;">Design</span>
<div style="position:absolute;left:1516px;top:1562px;width:1859px;height:2px;box-sizing:border-box;background:#d2d2d2;"></div>
<div style="position:absolute;left:1550px;top:1580px;width:228.0px;height:38px;box-sizing:border-box;border:2px solid #f6e2a4;border-radius:19px;background:#f8ebc4"></div>
<svg style="position:absolute;left:1572.5px;top:1586.7px" width="23" height="23" viewBox="0 0 1 1" ><rect x="0.000" y="0.000" width="0.44" height="0.44" rx="0.158" fill="#333"/><rect x="0.000" y="0.560" width="0.44" height="0.44" rx="0.158" fill="#333"/><rect x="0.560" y="0.000" width="0.44" height="0.44" rx="0.158" fill="#333"/><rect x="0.560" y="0.560" width="0.44" height="0.44" rx="0.158" fill="#333"/></svg>
<span style="position:absolute;top:1581.4px;font-size:26px;line-height:34px;color:#333;white-space:nowrap;-webkit-text-stroke:0.22px #333;letter-spacing:0.22px;left:1611.5px;">FWCYL-873</span>
<span style="position:absolute;top:1580.0px;font-size:26px;line-height:34px;color:#2e6cc7;white-space:nowrap;-webkit-text-stroke:0.22px #2e6cc7;letter-spacing:0.75px;left:2000.0px;">Team Leaderboards</span>
<div style="position:absolute;left:3225px;top:1582px;width:125px;height:39px;border-radius:7px;background:#e4cfd9"></div>
<span style="position:absolute;top:1584.5px;font-size:26px;line-height:34px;color:#333;white-space:nowrap;-webkit-text-stroke:0.22px #333;letter-spacing:0.51px;left:2287.8px;width:2000px;text-align:center;">Design</span>
<div style="position:absolute;left:1516px;top:1639px;width:1859px;height:2px;box-sizing:border-box;background:#d2d2d2;"></div>
<div style="position:absolute;left:1550px;top:1657px;width:227.0px;height:38px;box-sizing:border-box;border:2px solid #f6e2a4;border-radius:19px;background:#f8ebc4"></div>
<svg style="position:absolute;left:1572.5px;top:1663.7px" width="23" height="23" viewBox="0 0 1 1" ><rect x="0.000" y="0.000" width="0.44" height="0.44" rx="0.158" fill="#333"/><rect x="0.000" y="0.560" width="0.44" height="0.44" rx="0.158" fill="#333"/><rect x="0.560" y="0.000" width="0.44" height="0.44" rx="0.158" fill="#333"/><rect x="0.560" y="0.560" width="0.44" height="0.44" rx="0.158" fill="#333"/></svg>
<span style="position:absolute;top:1658.4px;font-size:26px;line-height:34px;color:#333;white-space:nowrap;-webkit-text-stroke:0.22px #333;letter-spacing:0.11px;left:1611.5px;">FWCYL-872</span>
<span style="position:absolute;top:1657.0px;font-size:26px;line-height:34px;color:#2e6cc7;white-space:nowrap;-webkit-text-stroke:0.22px #2e6cc7;letter-spacing:0.34px;left:2000.0px;">Live Ride Sharing</span>
<div style="position:absolute;left:3148px;top:1659px;width:202px;height:39px;border-radius:7px;background:#f3f6ea"></div>
<span style="position:absolute;top:1661.5px;font-size:26px;line-height:34px;color:#333;white-space:nowrap;-webkit-text-stroke:0.22px #333;letter-spacing:0.71px;left:2249.4px;width:2000px;text-align:center;">Development</span>
<div style="position:absolute;left:1516px;top:1716px;width:1859px;height:2px;box-sizing:border-box;background:#d2d2d2;"></div>
<div style="position:absolute;left:1550px;top:1734px;width:224.0px;height:38px;box-sizing:border-box;border:2px solid #f6e2a4;border-radius:19px;background:#f8ebc4"></div>
<svg style="position:absolute;left:1572.5px;top:1740.7px" width="23" height="23" viewBox="0 0 1 1" ><rect x="0.000" y="0.000" width="0.44" height="0.44" rx="0.158" fill="#333"/><rect x="0.000" y="0.560" width="0.44" height="0.44" rx="0.158" fill="#333"/><rect x="0.560" y="0.000" width="0.44" height="0.44" rx="0.158" fill="#333"/><rect x="0.560" y="0.560" width="0.44" height="0.44" rx="0.158" fill="#333"/></svg>
<span style="position:absolute;top:1735.4px;font-size:26px;line-height:34px;color:#333;white-space:nowrap;-webkit-text-stroke:0.22px #333;letter-spacing:-0.23px;left:1611.5px;">FWCYL-871</span>
<span style="position:absolute;top:1734.0px;font-size:26px;line-height:34px;color:#2e6cc7;white-space:nowrap;-webkit-text-stroke:0.22px #2e6cc7;letter-spacing:0.41px;left:2000.0px;">Ride Challenges</span>
<div style="position:absolute;left:3096px;top:1736px;width:254px;height:39px;border-radius:7px;background:#fae3c3"></div>
<span style="position:absolute;top:1738.5px;font-size:26px;line-height:34px;color:#333;white-space:nowrap;-webkit-text-stroke:0.22px #333;letter-spacing:0.66px;left:2223.3px;width:2000px;text-align:center;">Ready to develop</span>
<div style="position:absolute;left:1516px;top:1793px;width:1859px;height:2px;box-sizing:border-box;background:#d2d2d2;"></div>
<div style="position:absolute;left:1550px;top:1811px;width:228.0px;height:38px;box-sizing:border-box;border:2px solid #f6e2a4;border-radius:19px;background:#f8ebc4"></div>
<svg style="position:absolute;left:1572.5px;top:1817.7px" width="23" height="23" viewBox="0 0 1 1" ><rect x="0.000" y="0.000" width="0.44" height="0.44" rx="0.158" fill="#333"/><rect x="0.000" y="0.560" width="0.44" height="0.44" rx="0.158" fill="#333"/><rect x="0.560" y="0.000" width="0.44" height="0.44" rx="0.158" fill="#333"/><rect x="0.560" y="0.560" width="0.44" height="0.44" rx="0.158" fill="#333"/></svg>
<span style="position:absolute;top:1812.4px;font-size:26px;line-height:34px;color:#333;white-space:nowrap;-webkit-text-stroke:0.22px #333;letter-spacing:0.22px;left:1611.5px;">FWCYL-870</span>
<span style="position:absolute;top:1811.0px;font-size:26px;line-height:34px;color:#2e6cc7;white-space:nowrap;-webkit-text-stroke:0.22px #2e6cc7;letter-spacing:0.28px;left:2000.0px;">Group Rides</span>
<div style="position:absolute;left:3225px;top:1813px;width:125px;height:39px;border-radius:7px;background:#e4cfd9"></div>
<span style="position:absolute;top:1815.5px;font-size:26px;line-height:34px;color:#333;white-space:nowrap;-webkit-text-stroke:0.22px #333;letter-spacing:0.51px;left:2287.8px;width:2000px;text-align:center;">Design</span>
<div style="position:absolute;left:1516px;top:1870px;width:1859px;height:2px;box-sizing:border-box;background:#d2d2d2;"></div>
<div style="position:absolute;left:1550px;top:1888px;width:223.0px;height:38px;box-sizing:border-box;border:2px solid #f6e2a4;border-radius:19px;background:#f8ebc4"></div>
<svg style="position:absolute;left:1572.5px;top:1894.7px" width="23" height="23" viewBox="0 0 1 1" ><rect x="0.000" y="0.000" width="0.44" height="0.44" rx="0.158" fill="#333"/><rect x="0.000" y="0.560" width="0.44" height="0.44" rx="0.158" fill="#333"/><rect x="0.560" y="0.000" width="0.44" height="0.44" rx="0.158" fill="#333"/><rect x="0.560" y="0.560" width="0.44" height="0.44" rx="0.158" fill="#333"/></svg>
<span style="position:absolute;top:1889.4px;font-size:26px;line-height:34px;color:#333;white-space:nowrap;-webkit-text-stroke:0.22px #333;letter-spacing:-0.34px;left:1611.5px;">FWCYL-771</span>
<span style="position:absolute;top:1888.0px;font-size:26px;line-height:34px;color:#2e6cc7;white-space:nowrap;-webkit-text-stroke:0.22px #2e6cc7;letter-spacing:0.79px;left:2000.0px;">Notify rider when on pace for KOM</span>
<div style="position:absolute;left:3148px;top:1890px;width:202px;height:39px;border-radius:7px;background:#f3f6ea"></div>
<span style="position:absolute;top:1892.5px;font-size:26px;line-height:34px;color:#333;white-space:nowrap;-webkit-text-stroke:0.22px #333;letter-spacing:0.71px;left:2249.4px;width:2000px;text-align:center;">Development</span>
<div style="position:absolute;left:1516px;top:1947px;width:1859px;height:2px;box-sizing:border-box;background:#d2d2d2;"></div>
<div style="position:absolute;left:1550px;top:1965px;width:227.0px;height:38px;box-sizing:border-box;border:2px solid #f6e2a4;border-radius:19px;background:#f8ebc4"></div>
<svg style="position:absolute;left:1572.5px;top:1971.7px" width="23" height="23" viewBox="0 0 1 1" ><rect x="0.000" y="0.000" width="0.44" height="0.44" rx="0.158" fill="#333"/><rect x="0.000" y="0.560" width="0.44" height="0.44" rx="0.158" fill="#333"/><rect x="0.560" y="0.000" width="0.44" height="0.44" rx="0.158" fill="#333"/><rect x="0.560" y="0.560" width="0.44" height="0.44" rx="0.158" fill="#333"/></svg>
<span style="position:absolute;top:1966.4px;font-size:26px;line-height:34px;color:#333;white-space:nowrap;-webkit-text-stroke:0.22px #333;letter-spacing:0.11px;left:1611.5px;">FWCYL-773</span>
<span style="position:absolute;top:1965.0px;font-size:26px;line-height:34px;color:#2e6cc7;white-space:nowrap;-webkit-text-stroke:0.22px #2e6cc7;letter-spacing:0.89px;left:2000.0px;">Notify me of friend achievements</span>
<div style="position:absolute;left:3230px;top:1967px;width:120px;height:39px;border-radius:7px;background:#f6f2cc"></div>
<span style="position:absolute;top:1969.5px;font-size:26px;line-height:34px;color:#333;white-space:nowrap;-webkit-text-stroke:0.22px #333;letter-spacing:0.64px;left:2290.3px;width:2000px;text-align:center;">Define</span>
<div style="position:absolute;left:0px;top:1984px;width:1464px;height:2px;box-sizing:border-box;background:#ececec;"></div>
<div style="position:absolute;left:1464px;top:1984px;width:1992px;height:2px;box-sizing:border-box;background:#dadada;"></div>
<div style="position:absolute;left:1464px;top:128px;width:2px;height:1856px;box-sizing:border-box;background:#e4e4e4;"></div>
</div></body></html>
